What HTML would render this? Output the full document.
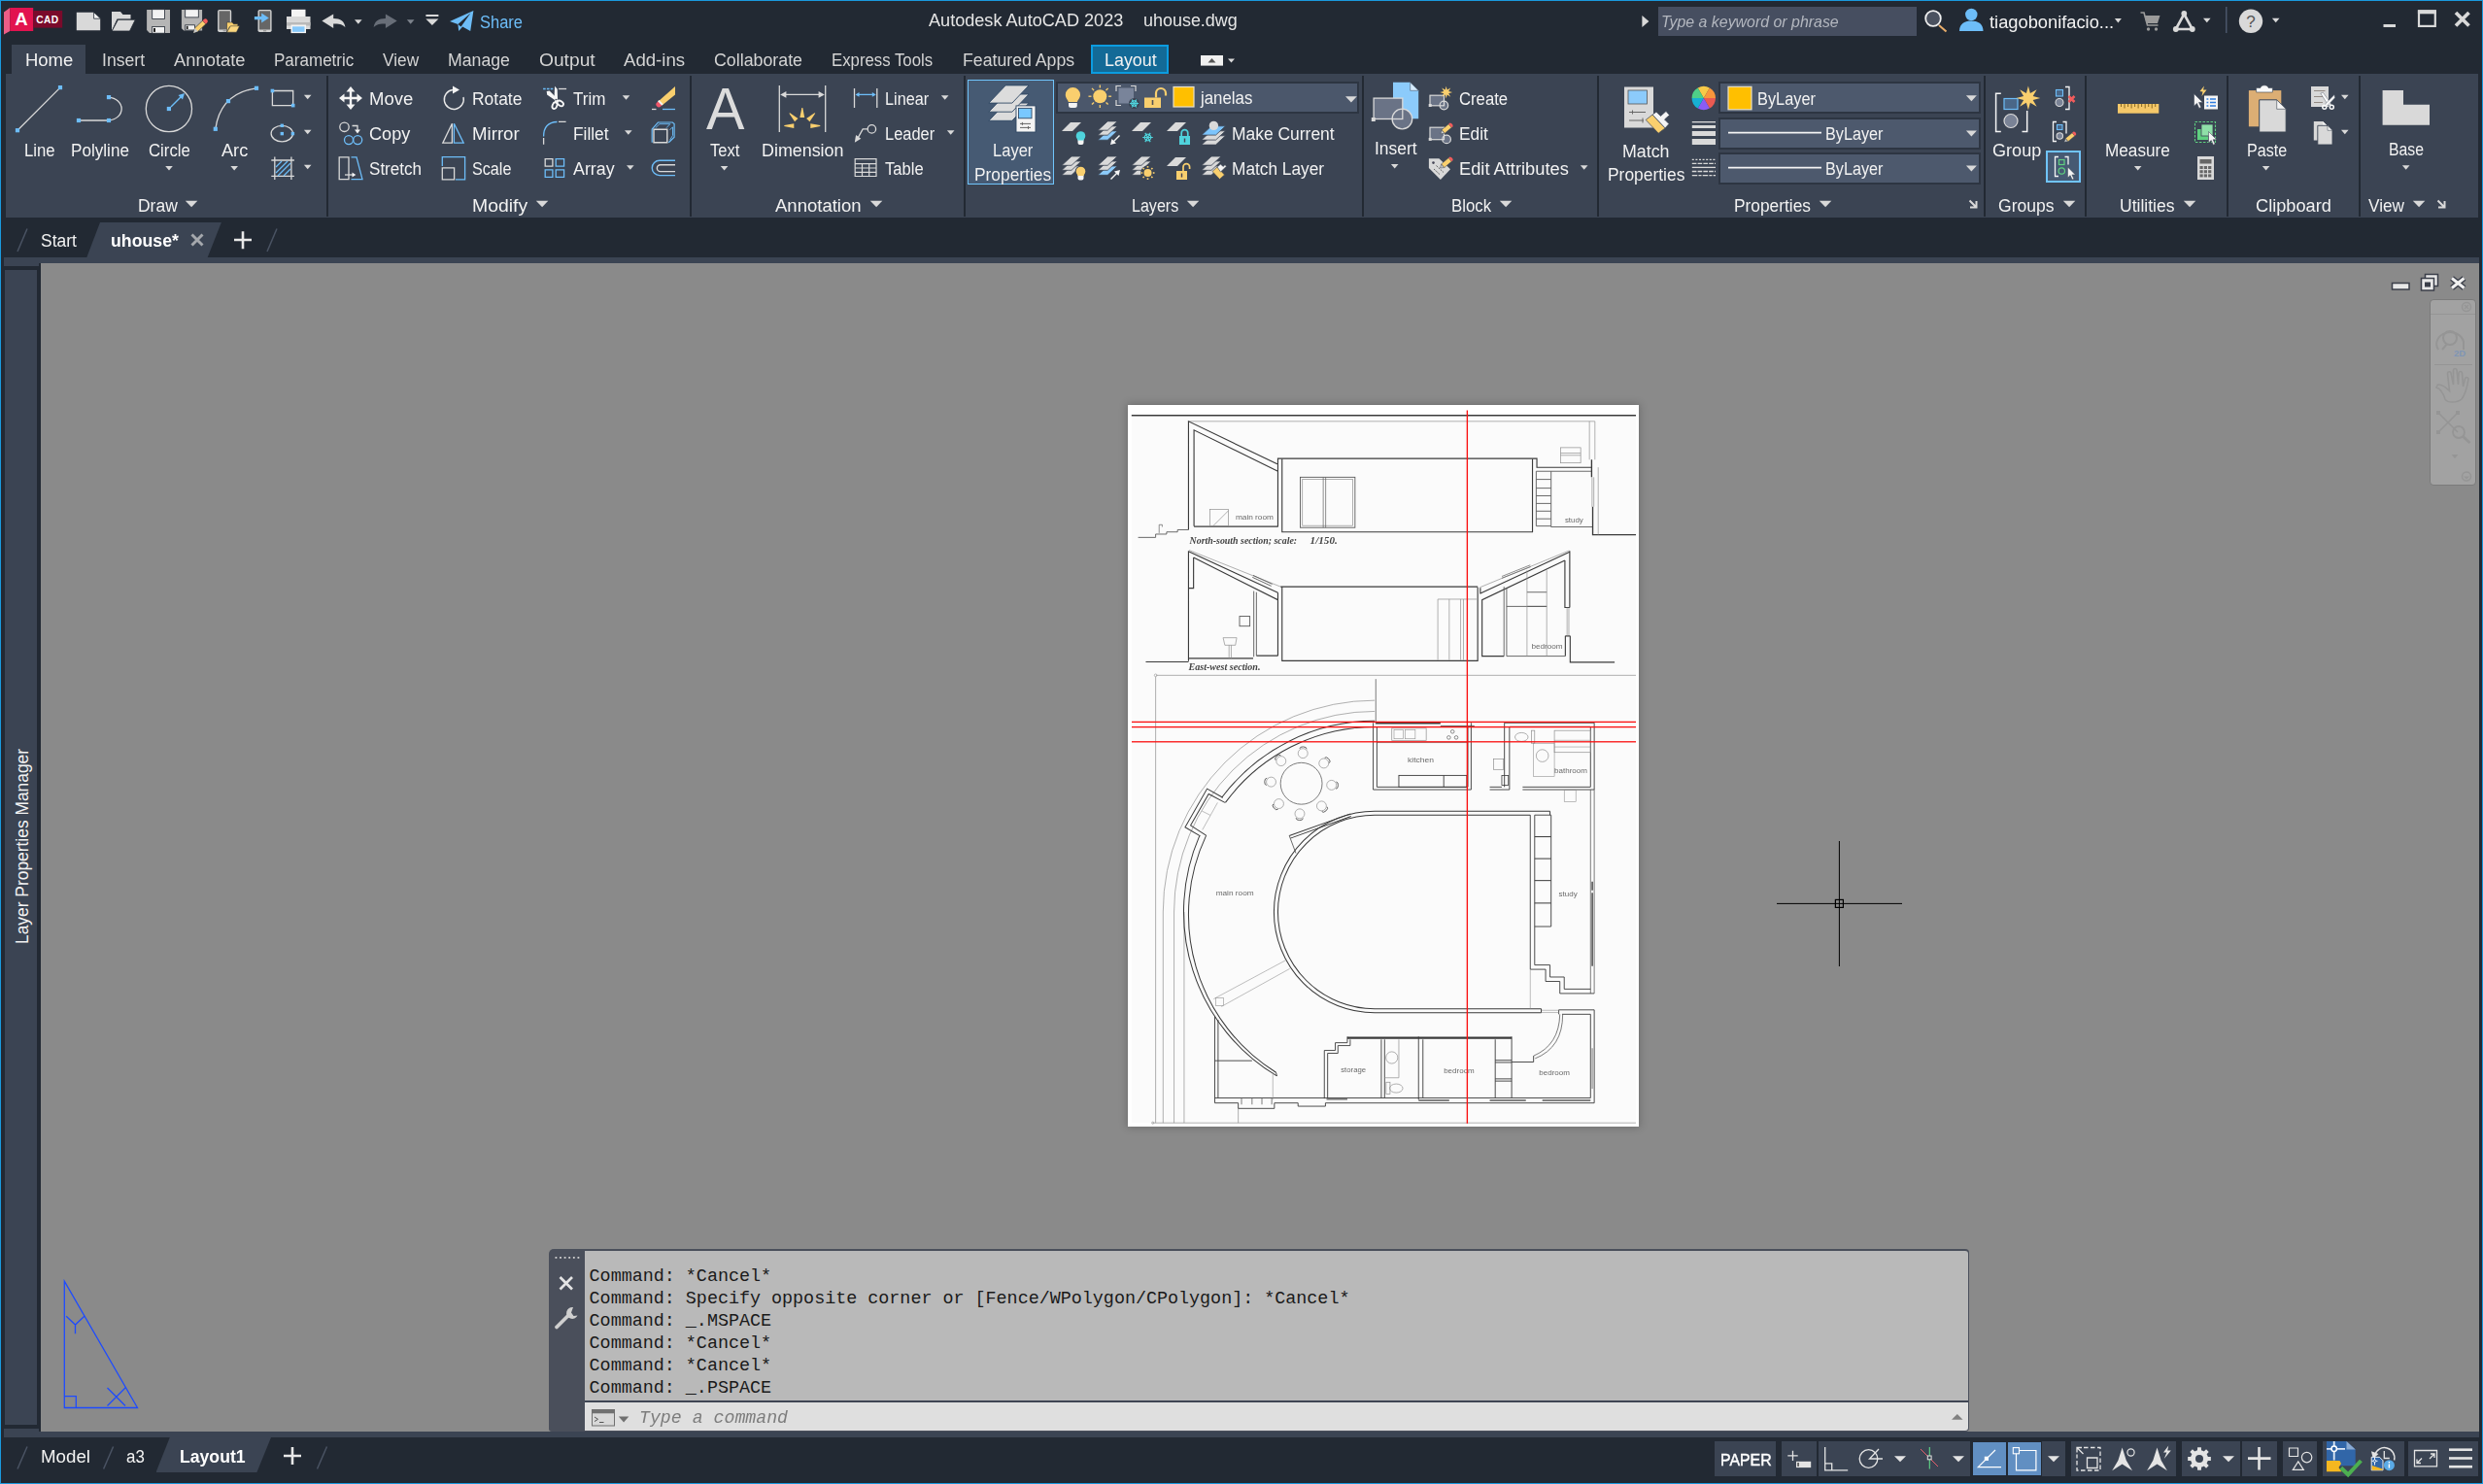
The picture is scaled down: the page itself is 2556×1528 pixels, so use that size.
<!DOCTYPE html>
<html><head><meta charset="utf-8"><title>Autodesk AutoCAD 2023 - uhouse.dwg</title>
<style>
html,body{margin:0;padding:0;background:#222933;overflow:hidden}
#app{position:relative;width:2556px;height:1528px;overflow:hidden;background:#222933}
.r{position:absolute}
.t{position:absolute;white-space:nowrap;transform-origin:0 0;margin:0;padding:0}
svg{position:absolute;overflow:visible}
</style></head><body><div id="app">
<div class="r" style="left:6px;top:76px;width:2545px;height:148px;background:#3b4453;"></div>
<div class="r" style="left:12px;top:46px;width:76px;height:31px;background:#3b4453;"></div>
<div class="r" style="left:336px;top:78px;width:2px;height:145px;background:#222933;"></div>
<div class="r" style="left:710px;top:78px;width:2px;height:145px;background:#222933;"></div>
<div class="r" style="left:992px;top:78px;width:2px;height:145px;background:#222933;"></div>
<div class="r" style="left:1402px;top:78px;width:2px;height:145px;background:#222933;"></div>
<div class="r" style="left:1644px;top:78px;width:2px;height:145px;background:#222933;"></div>
<div class="r" style="left:2042px;top:78px;width:2px;height:145px;background:#222933;"></div>
<div class="r" style="left:2146px;top:78px;width:2px;height:145px;background:#222933;"></div>
<div class="r" style="left:2292px;top:78px;width:2px;height:145px;background:#222933;"></div>
<div class="r" style="left:2428px;top:78px;width:2px;height:145px;background:#222933;"></div>
<div class="r" style="left:1123px;top:46px;width:80px;height:30px;background:#136a97;box-sizing:border-box;border:2px solid #0c9ce0;"></div>
<div class="r" style="left:996.4px;top:82.2px;width:88.6px;height:108px;background:#465a73;box-sizing:border-box;border:1.8px solid #70c4fb;"></div>
<div class="r" style="left:2106.2px;top:155.2px;width:35.9px;height:33px;background:#465a73;box-sizing:border-box;border:2px solid #70c4fb;"></div>
<div class="r" style="left:1087px;top:84px;width:312px;height:33px;background:#4b576b;box-sizing:border-box;border:2px solid #2d3542;"></div>
<div class="r" style="left:1769px;top:84px;width:270px;height:33px;background:#4d596d;box-sizing:border-box;border:2px solid #2d3542;"></div>
<div class="r" style="left:1769px;top:121px;width:270px;height:33px;background:#4d596d;box-sizing:border-box;border:2px solid #2d3542;"></div>
<div class="r" style="left:1769px;top:157px;width:270px;height:33px;background:#4d596d;box-sizing:border-box;border:2px solid #2d3542;"></div>
<div class="r" style="left:1707px;top:7px;width:266px;height:30px;background:#464e60;"></div>
<div class="r" style="left:89.3px;top:229px;width:138.6px;height:36px;background:#3b4453;clip-path:polygon(13.7px 0,100% 0,calc(100% - 14.2px) 100%,0 100%)"></div>
<div class="r" style="left:4px;top:265px;width:2548px;height:6px;background:#3b4453;"></div>
<div class="r" style="left:4px;top:271px;width:36px;height:3px;background:#3b4453;"></div>
<div class="r" style="left:42px;top:271px;width:2510px;height:1203px;background:#8a8a8a;"></div>
<div class="r" style="left:5px;top:278px;width:33px;height:1189px;background:#3b4453;"></div>
<div class="r" style="left:4px;top:1474px;width:2548px;height:6px;background:#3b4453;"></div>
<div class="r" style="left:4px;top:1471px;width:36px;height:3px;background:#3b4453;"></div>
<div class="r" style="left:160.5px;top:1480px;width:118.5px;height:36px;background:#3b4453;clip-path:polygon(14.3px 0,100% 0,calc(100% - 14.6px) 100%,0 100%)"></div>
<div class="r" style="left:2501px;top:307.5px;width:48px;height:192px;background:#a2a2a2;box-sizing:border-box;border:1px solid #7b7b7b;border-radius:4px;"></div>
<div class="r" style="left:565px;top:1286px;width:1462px;height:188px;background:#4a4f5b;border-radius:5px 4px 4px 3px;"></div>
<div class="r" style="left:602px;top:1287.5px;width:1423.5px;height:154px;background:#b9b9b9;border-radius:0 3px 0 0;"></div>
<div class="r" style="left:602px;top:1443.5px;width:1423.5px;height:29.5px;background:#dfdfdf;border-radius:0 0 3px 0;"></div>
<div class="r" style="left:602px;top:1441.8px;width:1423.5px;height:2.2px;background:#3f4654;"></div>
<div class="r" style="left:1764.8px;top:1483.7px;width:63.40000000000009px;height:36.2px;background:#3b4453;"></div>
<div class="r" style="left:1833.8px;top:1483.7px;width:36.200000000000045px;height:36.2px;background:#3b4453;"></div>
<div class="r" style="left:1871.7px;top:1483.7px;width:156.5px;height:36.2px;background:#3b4453;"></div>
<div class="r" style="left:2101.6px;top:1483.7px;width:24.90000000000009px;height:36.2px;background:#3b4453;"></div>
<div class="r" style="left:2132px;top:1483.7px;width:108.19999999999982px;height:36.2px;background:#3b4453;"></div>
<div class="r" style="left:2245.7px;top:1483.7px;width:60.30000000000018px;height:36.2px;background:#3b4453;"></div>
<div class="r" style="left:2307.8px;top:1483.7px;width:36.19999999999982px;height:36.2px;background:#3b4453;"></div>
<div class="r" style="left:2349.8px;top:1483.7px;width:35.19999999999982px;height:36.2px;background:#3b4453;"></div>
<div class="r" style="left:2390.5px;top:1483.7px;width:84.5px;height:36.2px;background:#3b4453;"></div>
<div class="r" style="left:2478.7px;top:1483.7px;width:72.30000000000018px;height:36.2px;background:#3b4453;"></div>
<div class="r" style="left:2031px;top:1485px;width:34px;height:34.2px;background:#618fc2;"></div>
<div class="r" style="left:2067px;top:1485px;width:34px;height:34.2px;background:#618fc2;"></div>
<div class="r" style="left:0px;top:0px;width:2556px;height:1.3px;background:#1a9ade;"></div>
<div class="r" style="left:0px;top:0px;width:1.3px;height:1528px;background:#1a9ade;"></div>
<div class="r" style="left:0px;top:1526.6px;width:2556px;height:1.4px;background:#1a9ade;"></div>
<div class="r" style="left:2555px;top:0px;width:1px;height:1528px;background:#1a9ade;"></div>
<div class="r" style="left:1161px;top:417px;width:526px;height:743px;background:#ffffff;box-shadow:0 0 8px 1px rgba(0,0,0,0.22);"></div>
<div class="r" style="left:1165px;top:429px;width:519px;height:727px;background:#fbfbfb;"></div>
<svg class="r" style="left:1140px;top:400px;filter:blur(0.35px)" width="560" height="820" viewBox="0 0 2483 3635.9" fill="none" stroke-linecap="butt"><path d="M110 123H2412" stroke="#3a3a3a" stroke-width="7"/>
<path d="M370 150H2225" stroke="#8c8c8c" stroke-width="3"/>
<path d="M370 645V150L775 345M395 628V190L778 378M395 630H778M778 632V320H1960V360H2210" stroke="#3a3a3a" stroke-width="5"/>
<path d="M797 322V655H1940V322" stroke="#3a3a3a" stroke-width="5"/>
<path d="M140 680H220V665H270V655H320V645H370" stroke="#5a5a5a" stroke-width="4"/>
<path d="M236 660V622H250V632" stroke="#5a5a5a" stroke-width="3"/>
<rect x="880" y="405" width="250" height="230" stroke="#5a5a5a" stroke-width="4"/>
<rect x="890" y="414" width="230" height="212" stroke="#8c8c8c" stroke-width="3"/>
<path d="M985 405V635M996 405V635" stroke="#5a5a5a" stroke-width="3"/>
<rect x="468" y="552" width="84" height="76" stroke="#8c8c8c" stroke-width="3"/>
<path d="M482 628L552 558" stroke="#8c8c8c" stroke-width="3"/>
<text x="585" y="598" font-size="29" fill="#6a6a6a" stroke="none" font-family="Liberation Sans,sans-serif"  textLength="173" lengthAdjust="spacingAndGlyphs">main room</text>
<path d="M1957 378H2210M1957 378V628H2025M2025 378V632H2215" stroke="#5a5a5a" stroke-width="4"/>
<path d="M1957 415H2025" stroke="#5a5a5a" stroke-width="4"/>
<path d="M1957 455H2025" stroke="#5a5a5a" stroke-width="4"/>
<path d="M1957 490H2025" stroke="#5a5a5a" stroke-width="4"/>
<path d="M1957 525H2025" stroke="#5a5a5a" stroke-width="4"/>
<path d="M1957 560H2025" stroke="#5a5a5a" stroke-width="4"/>
<path d="M1957 595H2025" stroke="#5a5a5a" stroke-width="4"/>
<text x="2088" y="614" font-size="29" fill="#6a6a6a" stroke="none" font-family="Liberation Sans,sans-serif"  textLength="84" lengthAdjust="spacingAndGlyphs">study</text>
<path d="M2215 540V668H2412M2210 325V405" stroke="#3a3a3a" stroke-width="6"/>
<path d="M2225 150V325M2240 360V668M2200 150V325M2212 405V540M2220 405V540" stroke="#8c8c8c" stroke-width="3"/>
<rect x="2068" y="270" width="92" height="70" stroke="#8c8c8c" stroke-width="3"/>
<path d="M2068 295H2160M2068 305H2160" stroke="#8c8c8c" stroke-width="3"/>
<text x="375" y="710" font-size="43" fill="#444" stroke="none" font-family="Liberation Serif,serif" font-style="italic" font-weight="bold" textLength="490" lengthAdjust="spacingAndGlyphs">North-south section; scale:</text>
<text x="925" y="710" font-size="43" fill="#444" stroke="none" font-family="Liberation Serif,serif" font-style="italic" font-weight="bold" textLength="125" lengthAdjust="spacingAndGlyphs">1/150.</text>
<path d="M175 1248H370M370 742V1245M393 772V912H370M370 744L778 932M393 772L778 965V1220M370 1232H665M680 1220H778M778 932V965" stroke="#3a3a3a" stroke-width="5"/>
<path d="M372 738L790 905" stroke="#8c8c8c" stroke-width="3"/>
<path d="M668 925V1225M680 930V1220" stroke="#5a5a5a" stroke-width="4"/>
<path d="M665 853L752 893M662 862L748 902" stroke="#5a5a5a" stroke-width="4"/>
<path d="M790 905H1690M797 908V1243H1690V908" stroke="#3a3a3a" stroke-width="5"/>
<path d="M1508 1240V962H1685M1560 962V1240M1612 962V1240M1625 962V1240" stroke="#8c8c8c" stroke-width="3"/>
<path d="M2110 746L1702 936M2088 785L1710 965V1222H1810M1702 910V938" stroke="#3a3a3a" stroke-width="5"/>
<path d="M2108 740L1700 908" stroke="#8c8c8c" stroke-width="3"/>
<path d="M2110 742V1000M2088 785V1000H2110M2112 1130V1250H2315M2090 1130V1222M2090 1130H2112" stroke="#3a3a3a" stroke-width="5"/>
<path d="M2098 1000V1130M2106 1000V1130" stroke="#8c8c8c" stroke-width="3"/>
<path d="M1810 905V1222M1822 910V1222H2090" stroke="#5a5a5a" stroke-width="4"/>
<path d="M1822 995H2005M1915 930H2005M1915 995H2005" stroke="#5a5a5a" stroke-width="4"/>
<path d="M1915 830V1222M2005 830V1222" stroke="#8c8c8c" stroke-width="3"/>
<path d="M1800 858L1930 806M1800 866L1932 814" stroke="#5a5a5a" stroke-width="3"/>
<rect x="603" y="1040" width="47" height="45" stroke="#5a5a5a" stroke-width="4"/>
<path d="M528 1138H590L584 1172H536zM555 1172V1232M565 1172V1232" stroke="#8c8c8c" stroke-width="3"/>
<text x="1935" y="1190" font-size="29" fill="#6a6a6a" stroke="none" font-family="Liberation Sans,sans-serif"  textLength="143" lengthAdjust="spacingAndGlyphs">bedroom</text>
<text x="370" y="1288" font-size="43" fill="#444" stroke="none" font-family="Liberation Serif,serif" font-style="italic" font-weight="bold" textLength="328" lengthAdjust="spacingAndGlyphs">East-west section.</text>
<path d="M222 1309.5H2412M220 1315.5V3353M205 3353H2412" stroke="#8c8c8c" stroke-width="3"/>
<circle cx="220" cy="1309.5" r="6" stroke="#8c8c8c" stroke-width="2.5"/>
<circle cx="207" cy="3353" r="5" stroke="#8c8c8c" stroke-width="2.5"/>
<path d="M1225 1326.5V1531.5" stroke="#5a5a5a" stroke-width="3.5"/>
<path d="M1220 1424A966 966 0 0 0 254 2390V3353" stroke="#8c8c8c" stroke-width="3"/>
<path d="M1220 1474A916 916 0 0 0 304 2390V3353" stroke="#8c8c8c" stroke-width="3"/>
<path d="M350 2390V3353" stroke="#8c8c8c" stroke-width="3"/>
<path d="M597 3287V3353" stroke="#8c8c8c" stroke-width="3"/>
<path d="M1220.0 1518.0A872 872 0 0 0 521.5 1868.0" stroke="#3a3a3a" stroke-width="4.5"/>
<path d="M419.7 2043.7A872 872 0 0 0 773.5 3139.0" stroke="#3a3a3a" stroke-width="4.5"/>
<path d="M1220.0 1545.0A845 845 0 0 0 538.3 1890.7" stroke="#3a3a3a" stroke-width="4.5"/>
<path d="M450.8 2040.1A850 850 0 0 0 769.4 3122.5" stroke="#3a3a3a" stroke-width="4.5"/>
<path d="M769.4 3122.5L773.5 3139.0" stroke="#3a3a3a" stroke-width="4"/>
<path d="M526.7 1868.0L454.9 1827.3L354.5 2003.1L423.8 2043.7" stroke="#3a3a3a" stroke-width="4.5"/>
<path d="M536.2 1890.7L462 1851.2L379.6 1994.7L450.1 2040.1" stroke="#3a3a3a" stroke-width="4.5"/>
<path d="M502.7 1890.7L433.4 2015.0M431 1929.0L469.2 1948.1" stroke="#8c8c8c" stroke-width="2.5"/>
<path d="M2020 1930H1220A460 460 0 0 0 1220 2850H1980" stroke="#3a3a3a" stroke-width="4.5"/>
<path d="M1930 1948H1220A442 442 0 0 0 1220 2832H1980" stroke="#3a3a3a" stroke-width="4.5"/>
<path d="M2020 1930V1948M1980 2832V2850" stroke="#3a3a3a" stroke-width="4.5"/>
<path d="M830 2041.5L1110 1941.5M835 2053.5L1112 1953.5" stroke="#3a3a3a" stroke-width="4.5"/>
<path d="M830 2041.5L860 2121.5" stroke="#5a5a5a" stroke-width="4"/>
<path d="M485 2787L820 2607M520 2822L832 2649" stroke="#8c8c8c" stroke-width="2.5"/>
<rect x="495" y="2783" width="35" height="34" stroke="#8c8c8c" stroke-width="2.5"/>
<circle cx="885" cy="1803.5" r="95" stroke="#5a5a5a" stroke-width="3.5"/>
<circle cx="892.2" cy="1665.7" r="22" stroke="#8c8c8c" stroke-width="3"/>
<path d="M-16 0A16 10 0 0 1 16 0" stroke="#5a5a5a" stroke-width="4" transform="translate(893.3 1645.7) rotate(3)"/>
<circle cx="987.6" cy="1711.2" r="22" stroke="#8c8c8c" stroke-width="3"/>
<path d="M-16 0A16 10 0 0 1 16 0" stroke="#5a5a5a" stroke-width="4" transform="translate(1002.4 1697.8) rotate(48)"/>
<circle cx="1022.8" cy="1810.7" r="22" stroke="#8c8c8c" stroke-width="3"/>
<path d="M-16 0A16 10 0 0 1 16 0" stroke="#5a5a5a" stroke-width="4" transform="translate(1042.8 1811.8) rotate(93)"/>
<circle cx="977.3" cy="1906.1" r="22" stroke="#8c8c8c" stroke-width="3"/>
<path d="M-16 0A16 10 0 0 1 16 0" stroke="#5a5a5a" stroke-width="4" transform="translate(990.7 1920.9) rotate(138)"/>
<circle cx="877.8" cy="1941.3" r="22" stroke="#8c8c8c" stroke-width="3"/>
<path d="M-16 0A16 10 0 0 1 16 0" stroke="#5a5a5a" stroke-width="4" transform="translate(876.7 1961.3) rotate(183)"/>
<circle cx="782.4" cy="1895.8" r="22" stroke="#8c8c8c" stroke-width="3"/>
<path d="M-16 0A16 10 0 0 1 16 0" stroke="#5a5a5a" stroke-width="4" transform="translate(767.6 1909.2) rotate(228)"/>
<circle cx="747.2" cy="1796.3" r="22" stroke="#8c8c8c" stroke-width="3"/>
<path d="M-16 0A16 10 0 0 1 16 0" stroke="#5a5a5a" stroke-width="4" transform="translate(727.2 1795.2) rotate(273)"/>
<circle cx="792.7" cy="1700.9" r="22" stroke="#8c8c8c" stroke-width="3"/>
<path d="M-16 0A16 10 0 0 1 16 0" stroke="#5a5a5a" stroke-width="4" transform="translate(779.3 1686.1) rotate(318)"/>
<text x="495" y="2313.5" font-size="29" fill="#6a6a6a" stroke="none" font-family="Liberation Sans,sans-serif"  textLength="173" lengthAdjust="spacingAndGlyphs">main room</text>
<path d="M1213 1526.5V1831.5H1660V1526.5M1230 1544.5V1819.5H1645V1544.5" stroke="#3a3a3a" stroke-width="4"/>
<path d="M1225 1528.5H1520M1520 1542.5H1675" stroke="#3a3a3a" stroke-width="6"/>
<path d="M1230 1616.5H1645" stroke="#5a5a5a" stroke-width="3"/>
<rect x="1298" y="1551.5" width="157" height="55.0" stroke="#8c8c8c" stroke-width="3"/>
<rect x="1308" y="1559.5" width="42" height="40.0" stroke="#8c8c8c" stroke-width="2.5"/>
<rect x="1358" y="1559.5" width="47" height="40.0" stroke="#8c8c8c" stroke-width="2.5"/>
<circle cx="1575" cy="1566.5" r="8" stroke="#5a5a5a" stroke-width="3"/>
<circle cx="1558" cy="1593.5" r="8" stroke="#5a5a5a" stroke-width="3"/>
<circle cx="1592" cy="1593.5" r="8" stroke="#5a5a5a" stroke-width="3"/>
<rect x="1330" y="1766.5" width="310" height="53.0" stroke="#3a3a3a" stroke-width="4"/>
<path d="M1535 1766.5V1819.5" stroke="#3a3a3a" stroke-width="4"/>
<text x="1370" y="1706.5" font-size="29" fill="#6a6a6a" stroke="none" font-family="Liberation Sans,sans-serif"  textLength="120" lengthAdjust="spacingAndGlyphs">kitchen</text>
<path d="M1745 1831.5H1835M1745 1819.5H1800" stroke="#3a3a3a" stroke-width="4"/>
<rect x="1800" y="1766.5" width="30" height="45.0" stroke="#3a3a3a" stroke-width="3.5"/>
<path d="M1812 1526.5V1819.5M1835 1544.5V1831.5M1812 1526.5H2222V1831.5H1895M1835 1544.5H2205V1819.5H1895" stroke="#3a3a3a" stroke-width="4"/>
<ellipse cx="1890" cy="1591.5" rx="30" ry="20" stroke="#8c8c8c" stroke-width="3"/>
<rect x="1935" y="1561.5" width="15" height="58.0" stroke="#8c8c8c" stroke-width="3"/>
<circle cx="1985" cy="1676.5" r="28" stroke="#8c8c8c" stroke-width="3"/>
<rect x="1945" y="1619.5" width="95" height="152.0" stroke="#8c8c8c" stroke-width="2.5"/>
<rect x="2040" y="1561.5" width="165" height="100.0" stroke="#8c8c8c" stroke-width="3"/>
<path d="M2040 1606.5H2205M2040 1636.5H2205" stroke="#8c8c8c" stroke-width="2.5"/>
<rect x="1762" y="1691.5" width="46" height="48.0" stroke="#8c8c8c" stroke-width="3"/>
<rect x="2085" y="1833.5" width="53" height="53.0" stroke="#8c8c8c" stroke-width="2.5"/>
<text x="2040" y="1757.5" font-size="29" fill="#6a6a6a" stroke="none" font-family="Liberation Sans,sans-serif"  textLength="150" lengthAdjust="spacingAndGlyphs">bathroom</text>
<path d="M2205 1831.5V2762M2222 1831.5V2762" stroke="#5a5a5a" stroke-width="3.5"/>
<path d="M2213 2251.5V2291.5M2213 2481.5V2302M2213 2477V2637" stroke="#3a3a3a" stroke-width="6"/>
<path d="M1930 1947.5V2652M1950 1947.5V2632" stroke="#3a3a3a" stroke-width="4"/>
<path d="M1950 1947.5H2025V2456.5H1950" stroke="#3a3a3a" stroke-width="4"/>
<path d="M1950 2046.5H2025" stroke="#3a3a3a" stroke-width="4.5"/>
<path d="M1950 2146.5H2025" stroke="#3a3a3a" stroke-width="4.5"/>
<path d="M1950 2246.5H2025" stroke="#3a3a3a" stroke-width="4.5"/>
<path d="M1950 2349.5H2025" stroke="#3a3a3a" stroke-width="4.5"/>
<text x="2060" y="2319.5" font-size="29" fill="#6a6a6a" stroke="none" font-family="Liberation Sans,sans-serif"  textLength="85" lengthAdjust="spacingAndGlyphs">study</text>
<path d="M1930 2652H2000V2707H2065V2762H2222M1950 2632H2020V2687H2085V2742H2205" stroke="#3a3a3a" stroke-width="4"/>
<path d="M1930 2652V2832" stroke="#8c8c8c" stroke-width="2.5"/>
<path d="M2060 2837H2222M2075 2857H2205M2205 2857V3239M2222 2837V3262M2060 2837V2857" stroke="#3a3a3a" stroke-width="4"/>
<path d="M1980 2839H2060M1980 2849H2060" stroke="#8c8c8c" stroke-width="2.5"/>
<path d="M2065 2857Q2062 2997 1945 3047M2078 2857Q2078 3009 1952 3059" stroke="#5a5a5a" stroke-width="3.5"/>
<path d="M1945 3047V3075H1845" stroke="#3a3a3a" stroke-width="4"/>
<path d="M2213 3012V3197" stroke="#8c8c8c" stroke-width="5"/>
<path d="M1095 2965H1845" stroke="#3a3a3a" stroke-width="10"/>
<path d="M990 3242V3022H1040V2987H1095V2959M1005 3239V3035H1052V3000H1108V2972" stroke="#3a3a3a" stroke-width="4"/>
<path d="M1250 2972V3239M1265 2972V3239M1420 2959V3247M1440 2972V3239" stroke="#3a3a3a" stroke-width="4"/>
<path d="M1330 2972V3147H1265" stroke="#8c8c8c" stroke-width="3"/>
<circle cx="1298" cy="3055" r="27" stroke="#8c8c8c" stroke-width="3"/>
<ellipse cx="1318" cy="3195" rx="30" ry="20" stroke="#8c8c8c" stroke-width="3"/>
<rect x="1272" y="3167" width="18" height="55" stroke="#8c8c8c" stroke-width="3"/>
<path d="M1770 2972V3239M1845 2959V3239M1770 3067H1845M1770 3077H1845M1770 3152H1845M1770 3162H1845" stroke="#3a3a3a" stroke-width="4"/>
<path d="M490 3239H2205M490 3262H597V3287H762V3262H870V3277H995V3262H2222" stroke="#3a3a3a" stroke-width="4"/>
<path d="M1000 3245H1095M1420 3250H1560M1745 3250H1910M1985 3250H2205" stroke="#5a5a5a" stroke-width="6"/>
<path d="M612 3239V3269M660 3239V3269M705 3239V3269M750 3239V3269" stroke="#5a5a5a" stroke-width="3.5"/>
<path d="M490 2867V3262M505 2882V3239M490 3069H660" stroke="#3a3a3a" stroke-width="4"/>
<path d="M755 3122V3247" stroke="#8c8c8c" stroke-width="2.5"/>
<text x="1065" y="3120" font-size="29" fill="#6a6a6a" stroke="none" font-family="Liberation Sans,sans-serif"  textLength="115" lengthAdjust="spacingAndGlyphs">storage</text>
<text x="1535" y="3127" font-size="29" fill="#6a6a6a" stroke="none" font-family="Liberation Sans,sans-serif"  textLength="140" lengthAdjust="spacingAndGlyphs">bedroom</text>
<text x="1970" y="3135" font-size="29" fill="#6a6a6a" stroke="none" font-family="Liberation Sans,sans-serif"  textLength="140" lengthAdjust="spacingAndGlyphs">bedroom</text></svg>
<svg class="r" style="left:0;top:0" width="2556" height="1528" viewBox="0 0 2556 1528"><rect x="1509.700" y="422.500" width="1.350" height="734.300" fill="#fa0f0f"/><rect x="1165" y="742.75" width="519" height="1.300" fill="#fa0f0f"/><rect x="1165" y="747.95" width="519" height="1.300" fill="#fa0f0f"/><rect x="1165" y="763.15" width="519" height="1.300" fill="#fa0f0f"/></svg>
<svg style="left:0;top:0" width="2556" height="1528" viewBox="0 0 2556 1528">
<path d="M4 12.5L10.2 8V32L4 35.5z" fill="#ec5d86"/><rect x="10.2" y="8" width="24" height="24" fill="#e2134f"/><rect x="34.2" y="11" width="30" height="17.6" fill="#7a0a2b"/>
<text x="22" y="26.3" font-family="Liberation Sans,sans-serif" font-weight="bold" font-size="18.5" fill="#fff" text-anchor="middle">A</text>
<text x="49" y="23.8" font-family="Liberation Sans,sans-serif" font-weight="bold" font-size="10.2" fill="#fff" text-anchor="middle" letter-spacing="0.4">CAD</text>
<path d="M78.800 12.800H96.200L103.200 19V31.200H78.800z" fill="#d9d9d9"/><path d="M96.600 12.600V19.200H103.600z" fill="#f6f6f6" stroke="#222933" stroke-width="0.800"/>
<path d="M115 12h9l2.500 3h8v4.500h-14l-5.500 12z" fill="#d9d9d9"/><path d="M121.500 20.300h17.800l-5.800 11.700h-18.300z" fill="#d9d9d9" stroke="#222933" stroke-width="0.800"/>
<path d="M151.100 9.900h23.900v24h-21l-2.900-2.900z" fill="#b5b5b5"/><rect x="156.700" y="9.700" width="12.800" height="9.700" fill="#f2f2f2" stroke="#222933" stroke-width="0.800"/><rect x="156.700" y="27.400" width="12.800" height="6.800" fill="#f2f2f2" stroke="#222933" stroke-width="0.800"/><rect x="158" y="29" width="2" height="3.900" fill="#222"/>
<path d="M186.900 9.900h21.200v21.700h-18.800l-2.400-2.400z" fill="#b5b5b5"/><rect x="190.700" y="9.700" width="13.600" height="8.200" fill="#f2f2f2" stroke="#222933" stroke-width="0.800"/><rect x="190.700" y="25.800" width="9.800" height="5.200" fill="#f2f2f2" stroke="#222933" stroke-width="0.800"/><rect x="191.800" y="26.800" width="1.800" height="3.200" fill="#222"/>
<path d="M199.200 34l1.400-5.200 8-7.600 3.300 3.500-8 7.600z" fill="#f9cf6e" stroke="#222933" stroke-width="0.600"/><path d="M199.200 34l1.400-5.200 3.300 3.500z" fill="#c8c8c8"/><path d="M208.600 21.200l1.200-1.100a2.400 2.400 0 0 1 3.300 3.500l-1.200 1.100z" fill="#f25c5c"/>
<rect x="224.100" y="9.900" width="14.100" height="23.100" rx="1.800" fill="#d2d2d2"/><rect x="225.500" y="11.300" width="11.300" height="19.200" fill="#666"/><rect x="229.600" y="31.300" width="3.200" height="1" fill="#888"/><path d="M233.500 23h5.500l1.500 1.800h4.300v3h-8.500l-2.800 5.200z" fill="#f9cf6e" stroke="#222933" stroke-width="0.500"/><path d="M237.300 26.800h9.300l-3.200 6.400h-9.800z" fill="#fbd77f" stroke="#222933" stroke-width="0.500"/>
<rect x="265.500" y="9.900" width="14.100" height="23.100" rx="1.800" fill="#d2d2d2"/><rect x="266.900" y="11.300" width="11.300" height="19.200" fill="#666"/><rect x="271" y="31.300" width="3.200" height="1" fill="#888"/><path d="M261.900 17h7.300v-3.400l7.600 5-7.600 5v-3.400h-7.300z" fill="#6dbdf8"/>
<rect x="300" y="9.8" width="14.5" height="8" fill="#f4f4f4"/><path d="M295 17h24.5v13h-24.5z" fill="#d9d9d9"/><rect x="295" y="23" width="24.5" height="3.5" fill="#b9b9b9"/><rect x="299.5" y="25.5" width="15.5" height="8.6" fill="#f4f4f4"/><rect x="301" y="27.3" width="12.5" height="5.5" fill="#86c8fa"/>
<path d="M331.400 21.600L343.200 14.600V19C350.500 19 354.800 22 355.400 28.200C352.500 25 348.500 24.600 343.200 24.600V29z" fill="#d9d9d9"/><path d="M365.0 20.2h7.6l-3.8 4.6z" fill="#d9d9d9"/>
<path d="M408.700 21.600L396.900 14.600V19C389.600 19 385.300 22 384.700 28.200C387.600 25 391.600 24.600 396.900 24.600V29z" fill="#686e78"/><path d="M418.9 20.2h7.6l-3.8 4.6z" fill="#7d838c"/>
<rect x="438.4" y="15" width="13" height="2" fill="#d9d9d9"/><path d="M438.4 19.4h13l-6.5 6.6z" fill="#d9d9d9"/>
<path d="M463 22l24.4-11-3.2 21-8-4.5-4 4.5-.8-7z" fill="#6dbdf8"/><path d="M471.4 25l13-11.5-9.8 14z" fill="#222933"/>
<rect x="1236" y="57" width="23" height="10.6" fill="#f0f0f0"/><path d="M1243.5 64.5h8l-4-4.5z" fill="#555"/><path d="M1264.0 60.4h7l-3.5 4.2z" fill="#d9d9d9"/>
<path d="M1690.4 16v12l7-6z" fill="#d9d9d9"/>
<circle cx="1990" cy="19" r="7.8" fill="#4b5260" stroke="#f0f0f0" stroke-width="1.8"/><path d="M1996 26l7.5 6.5" stroke="#e9ad6b" stroke-width="2"/>
<circle cx="2029.3" cy="15" r="6.2" fill="#6dbdf8"/><path d="M2017 32c0-8 6-10.5 12.3-10.5s12.2 2.500 12.2 10.5z" fill="#6dbdf8"/>
<path d="M2176.9 19.1h7l-3.5 4.4z" fill="#d9d9d9"/>
<path d="M2203.5 13h3.500l3.5 13h11" fill="none" stroke="#9a9a9a" stroke-width="1.6"/><path d="M2207.5 16h16l-2.500 8h-11.500z" fill="#9a9a9a"/><circle cx="2211.5" cy="30" r="1.700" fill="#9a9a9a"/><circle cx="2219.5" cy="30" r="1.700" fill="#9a9a9a"/>
<path d="M2248.3 14.500L2239.800 30h17z" fill="none" stroke="#d9d9d9" stroke-width="2.600" stroke-linejoin="round"/><circle cx="2248.3" cy="14" r="2.900" fill="#d9d9d9"/><circle cx="2239.800" cy="30" r="2.900" fill="#d9d9d9"/><circle cx="2256.800" cy="30" r="2.900" fill="#d9d9d9"/><path d="M2268.0 18.7h7.6l-3.8 4.6z" fill="#d9d9d9"/>
<rect x="2291" y="7" width="1.500" height="27" fill="#4a566b"/>
<circle cx="2317" cy="21.800" r="12.200" fill="#d9d9d9"/><text x="2317" y="28" font-family="Liberation Sans,sans-serif" font-size="17" fill="#555" text-anchor="middle">?</text><path d="M2338.9 18.7h7.6l-3.8 4.6z" fill="#d9d9d9"/>
<rect x="2453.500" y="25" width="12.500" height="3" fill="#d9d9d9"/><rect x="2490" y="11.400" width="16.800" height="15.500" fill="none" stroke="#d9d9d9" stroke-width="2.200"/><rect x="2488.900" y="10.300" width="19" height="4" fill="#d9d9d9"/><path d="M2528 13l13.500 13.500m0-13.500l-13.500 13.500" stroke="#d9d9d9" stroke-width="3.700" fill="none"/>
<path d="M197.500 241.500l11 11m0-11l-11 11" stroke="#a5a8ad" stroke-width="2.900"/>
<path d="M241 247h18M250 238.200v18" stroke="#e8e8e8" stroke-width="2.600"/>
<path d="M18 259l10-23.500" stroke="#4a5363" stroke-width="1.500"/>
<path d="M275 259l10-23.500" stroke="#4a5363" stroke-width="1.500"/>
<path d="M18 1512.500l10-23" stroke="#4a5363" stroke-width="1.500"/>
<path d="M106.6 1512.500l10-23" stroke="#4a5363" stroke-width="1.500"/>
<path d="M326.5 1512.500l10-23" stroke="#4a5363" stroke-width="1.500"/>
<path d="M292 1499h18M301 1490v18" stroke="#e8e8e8" stroke-width="2.600"/>
<path d="M190.8 206.8h12.5l-6.2 6.5z" fill="#d9d9d9"/>
<path d="M551.8 206.8h12.5l-6.2 6.5z" fill="#d9d9d9"/>
<path d="M895.8 206.8h12.5l-6.2 6.5z" fill="#d9d9d9"/>
<path d="M1221.8 206.8h12.5l-6.2 6.5z" fill="#d9d9d9"/>
<path d="M1543.8 206.8h12.5l-6.2 6.5z" fill="#d9d9d9"/>
<path d="M1872.8 206.8h12.5l-6.2 6.5z" fill="#d9d9d9"/>
<path d="M2123.8 206.8h12.5l-6.2 6.5z" fill="#d9d9d9"/>
<path d="M2247.8 206.8h12.5l-6.2 6.5z" fill="#d9d9d9"/>
<path d="M2483.8 206.8h12.5l-6.2 6.5z" fill="#d9d9d9"/>
<path d="M2027.5 206.500l6.500 6.500m0.500-6v6.500h-6.500" stroke="#d9d9d9" stroke-width="2" fill="none"/>
<path d="M2509.5 206.500l6.500 6.500m0.500-6v6.500h-6.500" stroke="#d9d9d9" stroke-width="2" fill="none"/>
<path d="M170.2 170.9h7.6l-3.8 4.6z" fill="#d9d9d9"/>
<path d="M237.4 170.9h7.6l-3.8 4.6z" fill="#d9d9d9"/>
<path d="M312.9 97.7h7.6l-3.8 4.6z" fill="#d9d9d9"/>
<path d="M312.9 133.7h7.6l-3.8 4.6z" fill="#d9d9d9"/>
<path d="M312.9 169.7h7.6l-3.8 4.6z" fill="#d9d9d9"/>
<path d="M640.7 98.2h7.6l-3.8 4.6z" fill="#d9d9d9"/>
<path d="M643.0 134.2h7.6l-3.8 4.6z" fill="#d9d9d9"/>
<path d="M645.0 170.2h7.6l-3.8 4.6z" fill="#d9d9d9"/>
<path d="M741.8 170.9h7.6l-3.8 4.6z" fill="#d9d9d9"/>
<path d="M968.9 98.2h7.6l-3.8 4.6z" fill="#d9d9d9"/>
<path d="M974.9 134.2h7.6l-3.8 4.6z" fill="#d9d9d9"/>
<path d="M1431.9 168.9h7.6l-3.8 4.6z" fill="#d9d9d9"/>
<path d="M1626.9 170.2h7.6l-3.8 4.6z" fill="#d9d9d9"/>
<path d="M2196.9 170.9h7.6l-3.8 4.6z" fill="#d9d9d9"/>
<path d="M2328.8 170.9h7.6l-3.8 4.6z" fill="#d9d9d9"/>
<path d="M2410.0 97.7h7.6l-3.8 4.6z" fill="#d9d9d9"/>
<path d="M2410.0 133.7h7.6l-3.8 4.6z" fill="#d9d9d9"/>
<path d="M2472.9 170.2h7.6l-3.8 4.6z" fill="#d9d9d9"/>
<path d="M1385.0 99.3h11.8l-5.9 6.3z" fill="#d9d9d9"/>
<path d="M2023.9 98.2h11l-5.5 6z" fill="#d9d9d9"/>
<path d="M2023.9 134.5h11l-5.5 6z" fill="#d9d9d9"/>
<path d="M2023.9 170.5h11l-5.5 6z" fill="#d9d9d9"/>
<path d="M18 134.200L62 90.100" stroke="#d9d9d9" stroke-width="1.3" fill="none" /><rect x="15.9" y="132.1" width="4.2" height="4.2" fill="#6dbdf8"/><rect x="59.9" y="88.0" width="4.2" height="4.2" fill="#6dbdf8"/>
<path d="M81 124H112A14.500 12 0 0 0 112 100.100" stroke="#d9d9d9" stroke-width="1.3" fill="none" /><rect x="78.9" y="121.9" width="4.2" height="4.2" fill="#6dbdf8"/><rect x="109.9" y="121.9" width="4.2" height="4.2" fill="#6dbdf8"/><rect x="109.9" y="98.0" width="4.2" height="4.2" fill="#6dbdf8"/>
<circle cx="173.900" cy="112" r="23.600" fill="none" stroke="#d9d9d9" stroke-width="1.300"/><path d="M176 110L187 99" stroke="#6dbdf8" stroke-width="1.4" fill="none" /><path d="M190 96l-6.500 2 4.500 4.500z" fill="#6dbdf8"/><rect x="171.8" y="109.9" width="4.2" height="4.2" fill="#6dbdf8"/>
<path d="M221.800 132.800Q227 96 264 90.800" stroke="#d9d9d9" stroke-width="1.3" fill="none" /><rect x="219.7" y="130.7" width="4.2" height="4.2" fill="#6dbdf8"/><rect x="232.9" y="102.0" width="4.2" height="4.2" fill="#6dbdf8"/><rect x="261.9" y="88.7" width="4.2" height="4.2" fill="#6dbdf8"/>
<path d="M280.400 93.500H301.700V108.600H280.400z" stroke="#d9d9d9" stroke-width="1.3" fill="none" /><rect x="278.6" y="91.7" width="3.6" height="3.6" fill="#6dbdf8"/><rect x="299.9" y="106.8" width="3.6" height="3.6" fill="#6dbdf8"/>
<ellipse cx="290.300" cy="137.600" rx="11.200" ry="8.200" fill="none" stroke="#d9d9d9" stroke-width="1.300"/><rect x="288.6" y="135.9" width="3.4" height="3.4" fill="#6dbdf8"/><rect x="288.6" y="127.6" width="3.4" height="3.4" fill="#6dbdf8"/><rect x="299.7" y="135.9" width="3.4" height="3.4" fill="#6dbdf8"/>
<path d="M279.300 165H302.900M279.300 181.400H302.900M282.800 161.600V184.900M299.900 161.600V184.900" stroke="#d9d9d9" stroke-width="1.3" fill="none" />
<path d="M284 172l6-6M284 178l12-12M286 181l13-13M292 181l7-7" stroke="#6dbdf8" stroke-width="1.3" fill="none" />
<path d="M361 89l4.500 5.500h-3.300v5.300h5.300v-3.300l5.500 4.500-5.500 4.500v-3.300h-5.300v5.300h3.300l-4.500 5.500-4.500-5.500h3.300v-5.300h-5.300v3.300l-5.500-4.500 5.500-4.500v3.300h5.300v-5.300h-3.300z" fill="#f4f4f4"/>
<path d="M466 92.500A10 10 0 1 0 477 100" stroke="#e8e8e8" stroke-width="1.4" fill="none" /><path d="M466 88.500v8l7-4z" fill="#f4f4f4"/>
<path d="M559.100 91.500h11" stroke="#6dbdf8" stroke-width="1.3" fill="none" stroke-dasharray="2.600 1.200"/><path d="M575.100 91.500h8" stroke="#d9d9d9" stroke-width="1.3" fill="none" />
<path d="M571.100 88.700L573.700 91.800L574 101.700L571.800 103.300L570.500 101.700z" fill="#f6f6f6"/><path d="M562.700 94L565.600 93.500L573.400 101.300L571.800 103.600L563.100 97.600z" fill="#f6f6f6"/><circle cx="572.200" cy="102.600" r="0.800" fill="#3b4453"/><ellipse cx="571" cy="108.700" rx="2.300" ry="3.500" fill="none" stroke="#f6f6f6" stroke-width="1.800" transform="rotate(22 571 108.700)"/><ellipse cx="576.800" cy="106.400" rx="2.300" ry="3.500" fill="none" stroke="#f6f6f6" stroke-width="1.800" transform="rotate(-55 576.800 106.400)"/><path d="M571.800 103.300l0.300 2.200M573 103l1.500 1.500" stroke="#f6f6f6" stroke-width="1.8" fill="none" />
<path d="M695 89v8.500l-13.500 11-4-4z" fill="#f9cf6e"/><path d="M681.500 108.500l-4-4-1.300 1a2.800 2.800 0 0 0 4 4z" fill="#f0566a"/><path d="M677 104.300l4.200 4.200 1.500-1.300-4.200-4.200z" fill="#f4f4f4"/><path d="M671 112.500h4.500" stroke="#d9d9d9" stroke-width="1.3" fill="none" /><path d="M682 112.500h13" stroke="#6dbdf8" stroke-width="1.3" fill="none" />
<circle cx="354.500" cy="130.800" r="4.700" fill="none" stroke="#d9d9d9" stroke-width="1.300"/><path d="M362.500 129.500h5.500v5" stroke="#d9d9d9" stroke-width="1.3" fill="none" /><path d="M365 133.500h6l-3 4z" fill="#f4f4f4"/><circle cx="359" cy="144.100" r="4.500" fill="none" stroke="#6dbdf8" stroke-width="1.300"/><circle cx="368.200" cy="144.100" r="4.500" fill="none" stroke="#6dbdf8" stroke-width="1.300"/>
<path d="M455.800 147.200H465.400V127.300z" stroke="#d9d9d9" stroke-width="1.3" fill="none" /><path d="M467.400 147.200H477.200L467.400 127.300z" stroke="#6dbdf8" stroke-width="1.3" fill="none" />
<path d="M559.600 140.500Q559.600 126 573.500 125.500" stroke="#6dbdf8" stroke-width="1.3" fill="none" /><path d="M575 125.400h7.600M559.600 142v6.800" stroke="#d9d9d9" stroke-width="1.3" fill="none" />
<path d="M671.200 146.800V133L677.400 126H692.300L694.100 127.500V141.300L688.300 146.800" stroke="#6dbdf8" stroke-width="1.2" fill="none" /><path d="M674.700 131.700L678.900 127.700H689.800L686 131.700M689.500 133.800L692.500 130.800V139.500L689.500 144.300" stroke="#6dbdf8" stroke-width="0.9" fill="none" /><path d="M673 133.300h13.800v13.500h-13.800z" stroke="#d9d9d9" stroke-width="1.4" fill="none" />
<path d="M349.200 161.800h9.800v22.900h-9.800z" stroke="#d9d9d9" stroke-width="1.3" fill="none" /><path d="M361.500 161.800h5.500l6 22.900h-11.500" stroke="#6dbdf8" stroke-width="1.3" fill="none" /><path d="M355 180h8.500" stroke="#d9d9d9" stroke-width="1.3" fill="none" /><path d="M362.500 177.500v5l3.800-2.500z" fill="#f4f4f4"/>
<path d="M455.300 171V161.600H478.600V184.900H469" stroke="#6dbdf8" stroke-width="1.3" fill="none" /><path d="M455.300 172.800H467.600V184.900H455.300z" stroke="#d9d9d9" stroke-width="1.3" fill="none" />
<path d="M561.200 163.700h7.700v7.500h-7.700z" stroke="#d9d9d9" stroke-width="1.3" fill="none" /><path d="M572.200 163.700h8.400v7.500h-8.400z" stroke="#6dbdf8" stroke-width="1.3" fill="none" /><path d="M561.200 174.800h7.700v7.600h-7.700z" stroke="#6dbdf8" stroke-width="1.3" fill="none" /><path d="M572.200 174.800h8.400v7.600h-8.400z" stroke="#6dbdf8" stroke-width="1.3" fill="none" />
<path d="M695 165.300H678.900a7.650 7.650 0 0 0 0 15.300H695" stroke="#6dbdf8" stroke-width="1.4" fill="none" /><path d="M695 169.700H679.800a3.450 3.450 0 0 0 0 6.900H695" stroke="#d9d9d9" stroke-width="1.4" fill="none" />
<path d="M802.300 88V136M849.700 88V136M806 97.400H846" stroke="#d9d9d9" stroke-width="1.3" fill="none" /><path d="M803.200 97.400l6.200-3.400v6.800zM848.800 97.400l-6.200-3.400v6.800z" fill="#d9d9d9"/>
<path d="M8.500 -2.400L18.500 -0.500V0.500L8.500 2.400z" fill="#f9cf6e" transform="translate(825.800 129.600) rotate(-90)"/>
<path d="M8.500 -2.400L18.500 -0.500V0.500L8.500 2.400z" fill="#f9cf6e" transform="translate(825.800 129.600) rotate(-45)"/>
<path d="M8.500 -2.400L18.500 -0.500V0.500L8.500 2.400z" fill="#f9cf6e" transform="translate(825.800 129.600) rotate(-135)"/>
<path d="M8.500 -2.400L18.500 -0.500V0.500L8.500 2.400z" fill="#f9cf6e" transform="translate(825.800 129.600) rotate(0)"/>
<path d="M8.500 -2.400L18.500 -0.500V0.500L8.500 2.400z" fill="#f9cf6e" transform="translate(825.800 129.600) rotate(180)"/>
<path d="M879.500 91V111M902.800 91V111" stroke="#d9d9d9" stroke-width="1.3" fill="none" /><path d="M883 97.400h16.500" stroke="#6dbdf8" stroke-width="1.3" fill="none" /><path d="M880.500 97.400l4-2.400v4.800zM901.800 97.400l-4-2.400v4.800z" fill="#6dbdf8"/>
<circle cx="897.400" cy="132.900" r="4.200" fill="none" stroke="#d9d9d9" stroke-width="1.300"/><path d="M893.200 132.900h-5l-5 9" stroke="#d9d9d9" stroke-width="1.3" fill="none" /><path d="M879.800 146.800l1.300-7.800 5.200 3.700z" fill="#d9d9d9"/>
<path d="M880.200 163.700H902V181.500H880.200zM880.200 168.700H902M880.200 173H902M880.200 177.300H902M887.500 168.700V181.500M894.700 168.700V181.500" stroke="#d9d9d9" stroke-width="1.2" fill="none" />
<path d="M1035.200 106.1H1059.100L1041.900 124.3H1017.900z" fill="#dcdcdc" stroke="#2f4763" stroke-width="0.900"/>
<path d="M1035.200 97H1059.100L1041.900 115.2H1017.900z" fill="#dcdcdc" stroke="#2f4763" stroke-width="0.900"/>
<path d="M1035.200 87.9H1059.100L1041.900 106.10000000000001H1017.900z" fill="#dcdcdc" stroke="#2f4763" stroke-width="0.900"/>
<rect x="1046" y="108.900" width="20" height="27.100" fill="#f4f4f4" stroke="#2f4763" stroke-width="0.900"/><rect x="1048.500" y="111.400" width="13.500" height="10.400" fill="#78c8ff" stroke="#2f4763" stroke-width="0.900"/><path d="M1050 127.400h11M1050 131.400h11M1052.400 125.900v3M1058.500 129.900v3" stroke="#666" stroke-width="1" fill="none" />
<path d="M1096.800 97.500a7.600 7.600 0 1 1 15.200 0c0 3.500-2.500 5-3 7.500h-9.200c-.5-2.500-3-4-3-7.500z" fill="#f9cf6e"/><path d="M1100 106h8.800v2.500a2.500 2.500 0 0 1-2.500 2.500h-3.800a2.500 2.500 0 0 1-2.500-2.500z" fill="#f4f4f4"/>
<circle cx="1132.300" cy="99.200" r="7" fill="#f9cf6e"/>
<path d="M8.800 0H11.800" stroke="#f9cf6e" stroke-width="1.300" transform="translate(1132.300 99.200) rotate(0)"/>
<path d="M8.800 0H11.800" stroke="#f9cf6e" stroke-width="1.300" transform="translate(1132.300 99.200) rotate(45)"/>
<path d="M8.800 0H11.800" stroke="#f9cf6e" stroke-width="1.300" transform="translate(1132.300 99.200) rotate(90)"/>
<path d="M8.800 0H11.800" stroke="#f9cf6e" stroke-width="1.300" transform="translate(1132.300 99.200) rotate(135)"/>
<path d="M8.800 0H11.800" stroke="#f9cf6e" stroke-width="1.300" transform="translate(1132.300 99.200) rotate(180)"/>
<path d="M8.800 0H11.800" stroke="#f9cf6e" stroke-width="1.300" transform="translate(1132.300 99.200) rotate(225)"/>
<path d="M8.800 0H11.800" stroke="#f9cf6e" stroke-width="1.300" transform="translate(1132.300 99.200) rotate(270)"/>
<path d="M8.800 0H11.800" stroke="#f9cf6e" stroke-width="1.300" transform="translate(1132.300 99.200) rotate(315)"/>
<rect x="1151.500" y="90.500" width="15.500" height="16" fill="#79849a"/><path d="M1149 94v-5.500h5M1164 88.500h5v5.500M1149 103v5.500h5" stroke="#d9d9d9" stroke-width="1.2" fill="none" />
<circle cx="1167.500" cy="106.500" r="5.500" fill="#3b4453"/><path d="M-4.6 0H4.6M-2.53 -1.47L-2.85 0L-2.53 1.47M2.53 -1.47L2.85 0L2.53 1.47" stroke="#4fd3dc" stroke-width="1.200" fill="none" transform="translate(1167.5 106.5) rotate(0)"/><path d="M-4.6 0H4.6M-2.53 -1.47L-2.85 0L-2.53 1.47M2.53 -1.47L2.85 0L2.53 1.47" stroke="#4fd3dc" stroke-width="1.200" fill="none" transform="translate(1167.5 106.5) rotate(60)"/><path d="M-4.6 0H4.6M-2.53 -1.47L-2.85 0L-2.53 1.47M2.53 -1.47L2.85 0L2.53 1.47" stroke="#4fd3dc" stroke-width="1.200" fill="none" transform="translate(1167.5 106.5) rotate(120)"/>
<rect x="1178" y="100.500" width="17" height="10.500" fill="#f9cf6e"/><rect x="1185.700" y="103" width="1.600" height="5" fill="#555"/><path d="M1190 100.500v-4.500a5 5 0 0 1 10 0v2.500" stroke="#f9cf6e" stroke-width="2.2" fill="none" />
<rect x="1208" y="89.500" width="21" height="20.500" fill="#ffbf00" stroke="#e8e0c8" stroke-width="1.200"/>
<path d="M1102.0 126.0H1113.0L1104.0 135.0H1093.0z" fill="#d9d9d9"/>
<circle cx="1112.5" cy="140" r="4.800" fill="#4fd3dc"/><path d="M1109.5 143.5h6v3.500a2 2 0 0 1-2 2h-2a2 2 0 0 1-2-2z" fill="#f4f4f4"/><rect x="1109.5" y="142.5" width="6" height="2" fill="#4fd3dc"/>
<path d="M1140.2 134.9H1150.2L1140.2 144.2H1130.2z" fill="#8ccbfb" stroke="#3b4453" stroke-width="0.800"/><path d="M1140.2 129.9H1150.2L1140.2 139.2H1130.2z" fill="#d9d9d9" stroke="#3b4453" stroke-width="0.800"/><path d="M1140.2 124.9H1150.2L1140.2 134.2H1130.2z" fill="#d9d9d9" stroke="#3b4453" stroke-width="0.800"/>
<path d="M1152.500 139.500l-7 7" stroke="#f4f4f4" stroke-width="1.4" fill="none" /><path d="M1143 149l1.500-6 4.500 4.500z" fill="#f4f4f4"/>
<path d="M1174.0 126.0H1185.0L1176.0 135.0H1165.0z" fill="#d9d9d9"/>
<path d="M-5.3 0H5.3M-2.92 -1.70L-3.29 0L-2.92 1.70M2.92 -1.70L3.29 0L2.92 1.70" stroke="#4fd3dc" stroke-width="1.200" fill="none" transform="translate(1181.5 141.5) rotate(0)"/><path d="M-5.3 0H5.3M-2.92 -1.70L-3.29 0L-2.92 1.70M2.92 -1.70L3.29 0L2.92 1.70" stroke="#4fd3dc" stroke-width="1.200" fill="none" transform="translate(1181.5 141.5) rotate(60)"/><path d="M-5.3 0H5.3M-2.92 -1.70L-3.29 0L-2.92 1.70M2.92 -1.70L3.29 0L2.92 1.70" stroke="#4fd3dc" stroke-width="1.200" fill="none" transform="translate(1181.5 141.5) rotate(120)"/>
<path d="M1210.0 126.0H1221.0L1212.0 135.0H1201.0z" fill="#d9d9d9"/>
<rect x="1214.0" y="140" width="11" height="9" fill="#4fd3dc"/><rect x="1218.8" y="142.5" width="1.400" height="4" fill="#445"/><path d="M1216.2 140v-3a3.300 3.300 0 0 1 6.600 0v3" stroke="#4fd3dc" stroke-width="1.700" fill="none"/>
<path d="M1247.0 139.8H1261.5L1251.5 149.1H1237.0z" fill="#d9d9d9" stroke="#3b4453" stroke-width="0.800"/><path d="M1247.0 134.8H1261.5L1251.5 144.1H1237.0z" fill="#d9d9d9" stroke="#3b4453" stroke-width="0.800"/><path d="M1247.0 129.8H1261.5L1251.5 139.1H1237.0z" fill="#7cc4fb" stroke="#3b4453" stroke-width="0.800"/><circle cx="1249.400" cy="129.400" r="4.700" fill="#d9d9d9"/>
<path d="M1103.0 171.0H1113.0L1103.0 180.3H1093.0z" fill="#d9d9d9" stroke="#3b4453" stroke-width="0.800"/><path d="M1103.0 166.0H1113.0L1103.0 175.3H1093.0z" fill="#d9d9d9" stroke="#3b4453" stroke-width="0.800"/><path d="M1103.0 161.0H1113.0L1103.0 170.3H1093.0z" fill="#d9d9d9" stroke="#3b4453" stroke-width="0.800"/>
<circle cx="1112.500" cy="176.500" r="5.800" fill="#3b4453"/><circle cx="1112.5" cy="176.5" r="4.800" fill="#f9cf6e"/><path d="M1109.5 180.0h6v3.500a2 2 0 0 1-2 2h-2a2 2 0 0 1-2-2z" fill="#f4f4f4"/><rect x="1109.5" y="179.0" width="6" height="2" fill="#f9cf6e"/>
<path d="M1140.2 171.0H1150.2L1140.2 180.3H1130.2z" fill="#8ccbfb" stroke="#3b4453" stroke-width="0.800"/><path d="M1140.2 166.0H1150.2L1140.2 175.3H1130.2z" fill="#d9d9d9" stroke="#3b4453" stroke-width="0.800"/><path d="M1140.2 161.0H1150.2L1140.2 170.3H1130.2z" fill="#d9d9d9" stroke="#3b4453" stroke-width="0.800"/>
<path d="M1143.500 184.500l7-7" stroke="#f4f4f4" stroke-width="1.4" fill="none" /><path d="M1153 175l-1.500 6-4.500-4.500z" fill="#f4f4f4"/>
<path d="M1175.0 171.0H1185.0L1175.0 180.3H1165.0z" fill="#d9d9d9" stroke="#3b4453" stroke-width="0.800"/><path d="M1175.0 166.0H1185.0L1175.0 175.3H1165.0z" fill="#d9d9d9" stroke="#3b4453" stroke-width="0.800"/><path d="M1175.0 161.0H1185.0L1175.0 170.3H1165.0z" fill="#d9d9d9" stroke="#3b4453" stroke-width="0.800"/>
<circle cx="1181.500" cy="178" r="7.500" fill="#3b4453"/><circle cx="1181.500" cy="178" r="4" fill="#f9cf6e"/>
<rect x="5.300" y="-0.800" width="1.700" height="1.600" fill="#f9cf6e" transform="translate(1181.500 178) rotate(0)"/>
<rect x="5.300" y="-0.800" width="1.700" height="1.600" fill="#f9cf6e" transform="translate(1181.500 178) rotate(45)"/>
<rect x="5.300" y="-0.800" width="1.700" height="1.600" fill="#f9cf6e" transform="translate(1181.500 178) rotate(90)"/>
<rect x="5.300" y="-0.800" width="1.700" height="1.600" fill="#f9cf6e" transform="translate(1181.500 178) rotate(135)"/>
<rect x="5.300" y="-0.800" width="1.700" height="1.600" fill="#f9cf6e" transform="translate(1181.500 178) rotate(180)"/>
<rect x="5.300" y="-0.800" width="1.700" height="1.600" fill="#f9cf6e" transform="translate(1181.500 178) rotate(225)"/>
<rect x="5.300" y="-0.800" width="1.700" height="1.600" fill="#f9cf6e" transform="translate(1181.500 178) rotate(270)"/>
<rect x="5.300" y="-0.800" width="1.700" height="1.600" fill="#f9cf6e" transform="translate(1181.500 178) rotate(315)"/>
<path d="M1210.0 162.0H1221.0L1212.0 171.0H1201.0z" fill="#d9d9d9"/>
<rect x="1211.0" y="176" width="11" height="9" fill="#f9cf6e"/><rect x="1215.8" y="178.5" width="1.400" height="4" fill="#445"/><path d="M1218.0 176v-4a3.300 3.300 0 0 1 6.600 0v2" stroke="#f9cf6e" stroke-width="1.700" fill="none"/>
<path d="M1247.0 171.0H1257.0L1247.0 180.3H1237.0z" fill="#d9d9d9" stroke="#3b4453" stroke-width="0.800"/><path d="M1247.0 166.0H1257.0L1247.0 175.3H1237.0z" fill="#d9d9d9" stroke="#3b4453" stroke-width="0.800"/><path d="M1247.0 161.0H1257.0L1247.0 170.3H1237.0z" fill="#d9d9d9" stroke="#3b4453" stroke-width="0.800"/>
<path d="M1248 176.500l5-4.500 7.500 8-5 4.500z" fill="#f9cf6e" stroke="#3b4453" stroke-width="0.600"/><path d="M1253 172l3.500-3 2.500 2.500 2-1.800 1.500 1.500-6 5.800z" fill="#f4f4f4" stroke="#3b4453" stroke-width="0.600"/>
<path d="M1434 84.800h17.700l8.500 8.500v28.900h-26.200z" fill="#8ccbfb"/><path d="M1451.700 84.800v8.500h8.500z" fill="#d6ecfd" stroke="#3b4453" stroke-width="0.500"/>
<rect x="1414.100" y="101.100" width="29.700" height="21.400" fill="#6a7386"/><circle cx="1443.400" cy="122.500" r="10.300" fill="#6a7386"/><rect x="1414.100" y="101.100" width="29.700" height="21.400" fill="none" stroke="#d9d9d9" stroke-width="1.300"/><circle cx="1443.400" cy="122.500" r="10.300" fill="none" stroke="#d9d9d9" stroke-width="1.300"/><rect x="1411.8" y="121.0" width="4" height="4" fill="#d9d9d9"/>
<rect x="1472" y="98.2" width="14.500" height="10.6" fill="#6a7386"/><circle cx="1486.4" cy="108.5" r="4.300" fill="#6a7386"/><rect x="1472" y="98.2" width="14.500" height="10.6" fill="none" stroke="#d9d9d9" stroke-width="1.200"/><circle cx="1486.4" cy="108.5" r="4.300" fill="none" stroke="#d9d9d9" stroke-width="1.200"/><rect x="1470.7" y="107.0" width="3" height="3" fill="#d9d9d9"/><polygon points="1488.70,88.70 1489.73,92.62 1493.23,90.57 1491.18,94.07 1495.10,95.10 1491.18,96.13 1493.23,99.63 1489.73,97.58 1488.70,101.50 1487.67,97.58 1484.17,99.63 1486.22,96.13 1482.30,95.10 1486.22,94.07 1484.17,90.57 1487.67,92.62" fill="#f9cf6e"/>
<rect x="1472" y="131.2" width="14.500" height="12.5" fill="#6a7386"/><circle cx="1489.1000000000001" cy="143.39999999999998" r="4.300" fill="#6a7386"/><rect x="1472" y="131.2" width="14.500" height="12.5" fill="none" stroke="#d9d9d9" stroke-width="1.200"/><circle cx="1489.1000000000001" cy="143.39999999999998" r="4.300" fill="none" stroke="#d9d9d9" stroke-width="1.200"/><rect x="1470.7" y="141.89999999999998" width="3" height="3" fill="#d9d9d9"/><path d="M1482.90 137.80L1487.20 137.32L1484.11 133.65z" fill="#c9c9c9" stroke="#3b4453" stroke-width="0.500"/><path d="M1487.20 137.32L1494.30 131.34L1491.21 127.67L1484.11 133.65z" fill="#f9cf6e" stroke="#3b4453" stroke-width="0.500"/><path d="M1494.30 131.34L1495.68 130.18Q1495.67 127.06 1492.59 126.51L1491.21 127.67z" fill="#f25c5c"/>
<path d="M1470.900 163.300H1481.400L1493 174.200L1482.900 185L1470.900 173z" fill="#d9d9d9"/><circle cx="1475.500" cy="167.600" r="1.300" fill="#445"/><path d="M1478.500 170.500l7.500 7M1476 174l6.500 6" stroke="#555" stroke-width="0.9" fill="none" stroke-dasharray="2 1"/><path d="M1482.50 173.00L1486.80 172.53L1483.72 168.85z" fill="#c9c9c9" stroke="#3b4453" stroke-width="0.500"/><path d="M1486.80 172.53L1494.30 166.24L1491.21 162.56L1483.72 168.85z" fill="#f9cf6e" stroke="#3b4453" stroke-width="0.500"/><path d="M1494.30 166.24L1495.68 165.08Q1495.67 161.96 1492.59 161.40L1491.21 162.56z" fill="#f25c5c"/>
<rect x="1672" y="89.500" width="30" height="42" fill="#d9d9d9"/><rect x="1676" y="93" width="19.500" height="14" fill="#8ccbfb" stroke="#555" stroke-width="0.800"/><path d="M1677 115.500h17M1677 124h15M1680.500 113.500v4M1691 121.500v5" stroke="#666" stroke-width="1" fill="none" />
<path d="M1694.200 123.400L1701.100 118.100L1714.100 131.900L1707.200 137.200z" fill="#f9cf6e" stroke="#3b4453" stroke-width="0.700"/><path d="M1701.100 118.100L1705 115.200L1709.500 119.500L1715 114.500L1718.500 118.500L1713.500 123L1718 127.500L1714.100 131.900z" fill="#f4f4f4" stroke="#3b4453" stroke-width="0.700"/>
<path d="M1753.8 101L1747.70 90.43A12.2 12.2 0 0 1 1759.90 90.43z" fill="#f7c948"/>
<path d="M1753.8 101L1759.90 90.43A12.2 12.2 0 0 1 1766.00 101.00z" fill="#f9963c"/>
<path d="M1753.8 101L1766.00 101.00A12.2 12.2 0 0 1 1759.90 111.57z" fill="#ea5a52"/>
<path d="M1753.8 101L1759.90 111.57A12.2 12.2 0 0 1 1747.70 111.57z" fill="#8a5cf5"/>
<path d="M1753.8 101L1747.70 111.57A12.2 12.2 0 0 1 1741.60 101.00z" fill="#17b0d2"/>
<path d="M1753.8 101L1741.60 101.00A12.2 12.2 0 0 1 1747.70 90.43z" fill="#4fcf88"/>
<rect x="1741.800" y="125" width="24.200" height="1.300" fill="#d9d9d9"/><rect x="1741.800" y="129" width="24.200" height="3" fill="#d9d9d9"/><rect x="1741.800" y="135" width="24.200" height="5" fill="#d9d9d9"/><rect x="1741.800" y="143" width="24.200" height="6" fill="#d9d9d9"/>
<path d="M1741.800 164.4h24.200" stroke="#d9d9d9" stroke-width="1.3" fill="none" stroke-dasharray="2 1.600"/>
<path d="M1741.800 168.4h24.200" stroke="#d9d9d9" stroke-width="1.3" fill="none" stroke-dasharray="4.600 1.200"/>
<path d="M1741.800 172.4h24.200" stroke="#d9d9d9" stroke-width="1.3" fill="none" stroke-dasharray="30 0"/>
<path d="M1741.800 176.5h24.200" stroke="#d9d9d9" stroke-width="1.3" fill="none" stroke-dasharray="4.600 1.200"/>
<path d="M1741.800 180.6h24.200" stroke="#d9d9d9" stroke-width="1.3" fill="none" stroke-dasharray="5.500 1.200 3 1.200"/>
<rect x="1779" y="89.300" width="24" height="23.500" fill="#ffbf00" stroke="#e8e0c8" stroke-width="1.200"/>
<path d="M1779 136.600h96" stroke="#f4f4f4" stroke-width="1.8" fill="none" /><path d="M1779 172.700h96" stroke="#f4f4f4" stroke-width="1.8" fill="none" />
<path d="M2059.800 96.300h-5.200v39.100h5.200M2081.500 135.400h5.200v-21.300" stroke="#f4f4f4" stroke-width="1.5" fill="none" />
<rect x="2063" y="101.500" width="14" height="11" fill="#4a6788" stroke="#6dbdf8" stroke-width="1.200"/><circle cx="2070" cy="124.500" r="7" fill="#7a8396" stroke="#d9d9d9" stroke-width="1.200"/><polygon points="2087.90,88.50 2089.89,96.09 2096.67,92.13 2092.71,98.91 2100.30,100.90 2092.71,102.89 2096.67,109.67 2089.89,105.71 2087.90,113.30 2085.91,105.71 2079.13,109.67 2083.09,102.89 2075.50,100.90 2083.09,98.91 2079.13,92.13 2085.91,96.09" fill="#f9cf6e"/>
<path d="M2126 89.500h4v23h-4" stroke="#f4f4f4" stroke-width="1.3" fill="none" /><rect x="2116.500" y="92.500" width="7" height="6.500" fill="#4a6788" stroke="#6dbdf8" stroke-width="1.100"/><circle cx="2120" cy="105.500" r="4" fill="#7a8396" stroke="#d9d9d9" stroke-width="1.100"/><path d="M2129.500 99l6 6m0-6l-6 6" stroke="#f25c5c" stroke-width="2.5" fill="none" />
<path d="M2117 125.500h-3.500v20h3.500M2123.500 125.500h3.500v12" stroke="#f4f4f4" stroke-width="1.3" fill="none" /><rect x="2117.500" y="128.500" width="5.500" height="5" fill="#4a6788" stroke="#6dbdf8" stroke-width="1.100"/><circle cx="2120.300" cy="140" r="3.200" fill="#7a8396" stroke="#d9d9d9" stroke-width="1.100"/><path d="M2124.80 146.30L2128.91 145.64L2126.25 142.39z" fill="#c9c9c9" stroke="#3b4453" stroke-width="0.500"/><path d="M2128.91 145.64L2135.77 140.00L2133.10 136.76L2126.25 142.39z" fill="#f9cf6e" stroke="#3b4453" stroke-width="0.500"/><path d="M2135.77 140.00L2137.16 138.86Q2137.37 135.96 2134.49 135.61L2133.10 136.76z" fill="#f25c5c"/>
<path d="M2119 161.500h-3.500v20h3.500M2125.500 161.500h3.500v8" stroke="#f4f4f4" stroke-width="1.3" fill="none" /><rect x="2119.500" y="164.500" width="5.500" height="5" fill="none" stroke="#5fd080" stroke-width="1.200"/><circle cx="2122.300" cy="176" r="3.200" fill="none" stroke="#5fd080" stroke-width="1.200"/><path d="M0 0v11l2.600-2.400 2 4.400 1.800-.8-2-4.300h3.500z" fill="#f4f4f4" stroke="#3b4453" stroke-width="0.500" transform="translate(2128.5 172) scale(1)"/>
<rect x="2180" y="107" width="42.300" height="9.700" fill="#f5c869"/>
<rect x="2183.0" y="107" width="1" height="3" fill="#8a6a20"/>
<rect x="2186.5" y="107" width="1" height="4.5" fill="#8a6a20"/>
<rect x="2190.1" y="107" width="1" height="3" fill="#8a6a20"/>
<rect x="2193.6" y="107" width="1" height="4.5" fill="#8a6a20"/>
<rect x="2197.1" y="107" width="1" height="3" fill="#8a6a20"/>
<rect x="2200.6" y="107" width="1" height="4.5" fill="#8a6a20"/>
<rect x="2204.1" y="107" width="1" height="3" fill="#8a6a20"/>
<rect x="2207.7" y="107" width="1" height="4.5" fill="#8a6a20"/>
<rect x="2211.2" y="107" width="1" height="3" fill="#8a6a20"/>
<rect x="2214.7" y="107" width="1" height="4.5" fill="#8a6a20"/>
<rect x="2218.2" y="107" width="1" height="3" fill="#8a6a20"/>
<path d="M2264.500 94l4.500-5.500-1 4h3.500l-5 6.500 1-4.500z" fill="#f9cf6e"/><path d="M0 0v11l2.600-2.400 2 4.400 1.800-.8-2-4.300h3.500z" fill="#f4f4f4" stroke="#3b4453" stroke-width="0.500" transform="translate(2258.5 96.5) scale(1.15)"/><rect x="2269" y="98.500" width="14" height="14" fill="#f4f4f4"/><path d="M2275 102h6M2275 105.500h6M2275 109h6" stroke="#2f7de0" stroke-width="1.3" fill="none" /><path d="M2271.500 102h1.800M2271.500 105.500h1.800M2271.500 109h1.800" stroke="#2f7de0" stroke-width="1.3" fill="none" />
<rect x="2259.500" y="125.500" width="21" height="21" fill="none" stroke="#5fd080" stroke-width="1.100" stroke-dasharray="2.500 1.500"/><rect x="2262" y="133" width="11" height="11" fill="#5fd080"/><rect x="2266" y="128" width="12" height="12" fill="#8fe0a8" stroke="#3b4453" stroke-width="0.800"/><path d="M0 0v11l2.600-2.400 2 4.400 1.800-.8-2-4.300h3.500z" fill="#f4f4f4" stroke="#3b4453" stroke-width="0.500" transform="translate(2273.5 135.5) scale(1.05)"/>
<rect x="2262" y="161" width="17" height="24" fill="#d9d9d9"/><rect x="2264.500" y="164" width="12" height="4.500" fill="#666"/>
<rect x="2264.5" y="171.0" width="3.200" height="3" fill="#666"/>
<rect x="2268.8" y="171.0" width="3.200" height="3" fill="#666"/>
<rect x="2273.1" y="171.0" width="3.200" height="3" fill="#666"/>
<rect x="2264.5" y="175.2" width="3.200" height="3" fill="#666"/>
<rect x="2268.8" y="175.2" width="3.200" height="3" fill="#666"/>
<rect x="2273.1" y="175.2" width="3.200" height="3" fill="#666"/>
<rect x="2264.5" y="179.4" width="3.200" height="3" fill="#666"/>
<rect x="2268.8" y="179.4" width="3.200" height="3" fill="#666"/>
<rect x="2273.1" y="179.4" width="3.200" height="3" fill="#666"/>
<rect x="2314.900" y="93.100" width="33.400" height="37.200" fill="#dcae74"/><path d="M2322.600 95v-4.600h4.300c0.600-3.400 7.600-3.400 8.200 0h4.300v4.600z" fill="#fafafa" stroke="#3b4453" stroke-width="0.600"/><path d="M2325.700 102.800h18l9.500 9.500v23.700h-27.500z" fill="#d9d9d9" stroke="#3b4453" stroke-width="1"/><path d="M2343.700 102.800v9.500h9.500z" fill="#f4f4f4" stroke="#3b4453" stroke-width="0.600"/>
<rect x="2379" y="89" width="18" height="21" fill="#d9d9d9"/><path d="M2382 93.500h11.500M2382 99.500h9M2382 105.500h9" stroke="#8a8078" stroke-width="0.9" fill="none" /><path d="M2388.800 96L2391.300 95.200L2400 107.500L2397 109z" fill="#fafafa" stroke="#3b4453" stroke-width="0.400"/><path d="M2403 97.500L2403.600 100.700L2395.500 109.200L2393.400 107.300z" fill="#fafafa" stroke="#3b4453" stroke-width="0.400"/><circle cx="2392.800" cy="110.300" r="2" fill="none" stroke="#fafafa" stroke-width="1.500"/><circle cx="2400.300" cy="110.300" r="2" fill="none" stroke="#fafafa" stroke-width="1.500"/>
<path d="M2381.800 125h9.400l4 4v15.500h-13.400z" fill="#d9d9d9"/><path d="M2391.200 125v4h4z" fill="#f4f4f4"/><path d="M2385.800 129.300h10.200l5 5v14.700h-15.200z" fill="#d9d9d9" stroke="#3b4453" stroke-width="0.900"/><path d="M2396 129.300v5h5z" fill="#f4f4f4" stroke="#3b4453" stroke-width="0.500"/>
<path d="M2452.600 93h21.400v14.800h27v21h-48.400z" fill="#d9d9d9"/>
<path d="M1840.300 1498.900h10.400M1845.500 1493.700v10.400" stroke="#e4e4e4" stroke-width="1.3" fill="none" /><rect x="1849" y="1504.800" width="15.200" height="6.300" fill="#e4e4e4"/><rect x="1850.300" y="1506" width="1.500" height="3.900" fill="#444"/>
<path d="M1878.700 1490v23.800h23.500M1878.700 1506.800h7v7" stroke="#e4e4e4" stroke-width="1.3" fill="none" />
<circle cx="1923.500" cy="1502" r="9.300" fill="none" stroke="#e4e4e4" stroke-width="1.300"/><path d="M1934 1492l-9.500 10h13.500" stroke="#e4e4e4" stroke-width="1.3" fill="none" />
<path d="M1950.0 1499.2h12l-6.0 6z" fill="#e4e4e4"/>
<path d="M1977 1492l18 18" stroke="#e8606c" stroke-width="1" fill="none" /><path d="M1986.300 1490v22.500" stroke="#5fdc88" stroke-width="1.1" fill="none" /><rect x="1984.300" y="1499" width="3.800" height="3.800" fill="#3b4453" stroke="#e4e4e4" stroke-width="1"/>
<path d="M2010.0 1499.2h12l-6.0 6z" fill="#e4e4e4"/>
<path d="M2054 1493l-17.700 17.600h23.700" stroke="#fff" stroke-width="1.2" fill="none" /><rect x="2042.800" y="1499.700" width="4.200" height="4.200" fill="#fff"/>
<path d="M2075.500 1493.500h20.400v20.400h-20.400z" stroke="#fff" stroke-width="1.2" fill="none" /><rect x="2072.300" y="1490.600" width="6.200" height="6.200" fill="#618fc2" stroke="#fff" stroke-width="1.100"/>
<path d="M2108.0 1499.2h12l-6.0 6z" fill="#e4e4e4"/>
<path d="M2138 1490.500h24v23.500h-24z" stroke="#e4e4e4" stroke-width="1.3" fill="none" stroke-dasharray="4.500 2.500"/><rect x="2136" y="1488.500" width="9" height="9" fill="#3b4453"/><path d="M2148.500 1501h10.500v10.500h-10.500z" stroke="#e4e4e4" stroke-width="1.3" fill="none" /><path d="M2138 1490.500l6.500 6.500M2138 1495.500v-5h5" stroke="#e4e4e4" stroke-width="1.3" fill="none" />
<path d="M0 -11.900L4.200 1.400L10.400 11.900L0 5.300L-10.400 11.900L-4.200 1.400z" fill="#e4e4e4" transform="translate(2184.6 1502.3)"/><circle cx="2193.500" cy="1495.500" r="3.600" fill="none" stroke="#e4e4e4" stroke-width="1.200"/>
<path d="M0 -11.900L4.200 1.400L10.400 11.900L0 5.300L-10.400 11.900L-4.200 1.400z" fill="#e4e4e4" transform="translate(2220.5 1502.3)"/><path d="M2232.300 1488.500l-5.300 7h3.400l-2.600 6.500 7-8.500h-3.600z" fill="#e4e4e4"/>
<polygon points="2272.34,1499.92 2275.85,1500.12 2275.85,1503.88 2272.34,1504.08 2271.37,1506.43 2273.71,1509.05 2271.05,1511.71 2268.43,1509.37 2266.08,1510.34 2265.88,1513.85 2262.12,1513.85 2261.92,1510.34 2259.57,1509.37 2256.95,1511.71 2254.29,1509.05 2256.63,1506.43 2255.66,1504.08 2252.15,1503.88 2252.15,1500.12 2255.66,1499.92 2256.63,1497.57 2254.29,1494.95 2256.95,1492.29 2259.57,1494.63 2261.92,1493.66 2262.12,1490.15 2265.88,1490.15 2266.08,1493.66 2268.43,1494.63 2271.05,1492.29 2273.71,1494.95 2271.37,1497.57" fill="#e4e4e4"/><circle cx="2264" cy="1502" r="9" fill="#e4e4e4"/><circle cx="2264" cy="1502" r="4" fill="#3b4453"/>
<path d="M2288.0 1499.2h12l-6.0 6z" fill="#e4e4e4"/>
<path d="M2314 1501.600h23.500M2325.500 1490v23.500" stroke="#e4e4e4" stroke-width="2.6" fill="none" />
<path d="M2356.500 1491h9v8.500h-9z" stroke="#e4e4e4" stroke-width="1.2" fill="none" /><circle cx="2374.600" cy="1500.600" r="5.200" fill="none" stroke="#e4e4e4" stroke-width="1.200"/><path d="M2360.300 1513.400h11l-5.500-8.500z" stroke="#e4e4e4" stroke-width="1.2" fill="none" />
<path d="M2395 1484h20.500l9.200 8.500v16.700h-29.700z" fill="#3166a8"/><path d="M2415.500 1484v8.500h9.200z" fill="#8aaad2"/><path d="M2395 1491.800h19M2402.700 1484v19.500" stroke="#dfe9f6" stroke-width="1.8" fill="none" /><circle cx="2402.700" cy="1491.800" r="2.700" fill="#3166a8" stroke="#fff" stroke-width="1.500"/><path d="M2395 1504h13.500l1.500 3-2.500 4 3 4.200h-15.500z" fill="#f5b720"/><path d="M2409.800 1511.300l7.300 7 13.300-14.300" stroke="#4caf50" stroke-width="4" fill="none"/>
<path d="M2444.500 1498.500A10.200 10.200 0 0 1 2464.600 1503.500" fill="none" stroke="#e4e4e4" stroke-width="1.500"/><path d="M2441 1494.300l7.500 2.700-5.700 5z" fill="#e4e4e4"/><path d="M2454.300 1494v7.500h5.500" stroke="#e4e4e4" stroke-width="1.3" fill="none" /><path d="M2441.200 1500.300h8.300l3.500 3.500v10h-11.800z" fill="#3166a8" stroke="#fff" stroke-width="0.900"/><path d="M2441.700 1509l11 3.500v1.300h-11z" fill="#f5b720"/><path d="M2441.500 1504.300h6M2444.500 1500.500v8" stroke="#fff" stroke-width="0.9" fill="none" /><circle cx="2444.500" cy="1504.300" r="1.300" fill="#3166a8" stroke="#fff" stroke-width="0.800"/><circle cx="2459.400" cy="1508.700" r="5.500" fill="#5aaae6"/><rect x="2458.700" y="1507.500" width="1.400" height="4" fill="#fff"/><rect x="2458.700" y="1505" width="1.400" height="1.400" fill="#fff"/>
<path d="M2485.500 1493.500h23v16.300h-23z" stroke="#e4e4e4" stroke-width="1.3" fill="none" /><path d="M2502 1497h4v4M2506 1497l-5 5M2492 1506.500h-4v-4M2488 1506.500l5-5" stroke="#e4e4e4" stroke-width="1.3" fill="none" />
<rect x="2521" y="1491.4" width="24" height="2.600" fill="#e4e4e4"/>
<rect x="2521" y="1500.2" width="24" height="2.600" fill="#e4e4e4"/>
<rect x="2521" y="1508.9" width="24" height="2.600" fill="#e4e4e4"/>
<rect x="571.5" y="1294" width="1.800" height="1.800" fill="#d0d0d0"/>
<rect x="576.1" y="1294" width="1.800" height="1.800" fill="#d0d0d0"/>
<rect x="580.7" y="1294" width="1.800" height="1.800" fill="#d0d0d0"/>
<rect x="585.3" y="1294" width="1.800" height="1.800" fill="#d0d0d0"/>
<rect x="589.9" y="1294" width="1.800" height="1.800" fill="#d0d0d0"/>
<rect x="594.5" y="1294" width="1.800" height="1.800" fill="#d0d0d0"/>
<path d="M576.500 1315l12.500 12.500m0-12.500l-12.500 12.500" stroke="#e4e4e4" stroke-width="2.7" fill="none" />
<path d="M573 1366.500l11.500-11.500" stroke="#cfcfcf" stroke-width="3.800" stroke-linecap="round"/><path d="M590 1346a6 6 0 1 0 4.500 8.500l-4 .5-2.500-3.500z" fill="#cfcfcf"/>
<rect x="609.500" y="1451.500" width="23" height="16.500" fill="#d8d8d8" stroke="#707070" stroke-width="1"/><rect x="609.500" y="1451.500" width="23" height="3.800" fill="#707070"/><path d="M612 1459l3.500 2.300-3.500 2.300M617 1464.500h4.500" stroke="#555" stroke-width="1" fill="none" />
<path d="M636.8 1458.6h10.5l-5.2 5.8z" fill="#707070"/>
<path d="M2009 1461.700h11.600l-5.800-5.700z" fill="#808080"/>
<rect x="2462.500" y="291.500" width="17.500" height="6.500" fill="#e8e8e8" stroke="#3b3f4a" stroke-width="1.500"/>
<rect x="2496.500" y="282.500" width="13" height="12" fill="#e8e8e8" stroke="#3b3f4a" stroke-width="1.500"/><rect x="2492.500" y="286.500" width="13" height="12.500" fill="#e8e8e8" stroke="#3b3f4a" stroke-width="1.500"/><rect x="2496" y="290.500" width="6" height="5" fill="#3b3f4a"/>
<path d="M2524 286.500l12.500 10m0-10l-12.500 10" stroke="#3b3f4a" stroke-width="6" fill="none" /><path d="M2524 286.500l12.500 10m0-10l-12.500 10" stroke="#f0f0f0" stroke-width="3" fill="none" />
<path d="M2502 323.500h46M2506 375.500h39" stroke="#959595" stroke-width="1" fill="none" />
<circle cx="2539" cy="316" r="4.500" fill="none" stroke="#959595" stroke-width="1.500"/><path d="M2537 314l4 4m0-4l-4 4" stroke="#959595" stroke-width="1.3" fill="none" />
<circle cx="2539" cy="490.500" r="4.500" fill="none" stroke="#959595" stroke-width="1.500"/><path d="M2536 490.500h6l-3 3z" fill="#959595"/>
<path d="M2510 360a14 12 0 1 1 26 -8v8" fill="none" stroke="#959595" stroke-width="2"/><circle cx="2522" cy="348" r="7" fill="none" stroke="#959595" stroke-width="2"/><path d="M2514 360l5-6" stroke="#959595" stroke-width="2"/>
<text x="2526" y="366.500" font-family="Liberation Sans,sans-serif" font-size="9.500" font-weight="bold" fill="#7f95b5">2D</text>
<path d="M2508 399c4 1 7 6 9 12c2 4 12 4 17 0c3-4 6-14 7-21c-1-2-3-2-3.500 0l-2 8l-1-14c-.5-2-3-2-3.500 0l-.5 12l-1.500-15c-.5-2-3-2-3.500 0v15l-2.500-12c-.5-2-3.500-1.500-3.500.5l2 18c-3-3-8-7-12-6.500z" fill="none" stroke="#959595" stroke-width="1.600"/>
<path d="M2510 425l20 20M2530 425l-20 20" stroke="#959595" stroke-width="1.6" fill="none" /><circle cx="2531" cy="445" r="6" fill="none" stroke="#959595" stroke-width="1.800"/><path d="M2535.500 449.500l7 6.500" stroke="#959595" stroke-width="2.8" fill="none" />
<rect x="2508" y="423" width="4" height="4" fill="#959595"/>
<rect x="2528" y="423" width="4" height="4" fill="#959595"/>
<rect x="2508" y="443" width="4" height="4" fill="#959595"/>
<path d="M2523.5 468.0h7l-3.5 4z" fill="#959595"/>
<path d="M66.300 1319.200V1449.500H141.500zM66.300 1437.600h12v11.900M68.200 1355.300l9.300 8.700 9.300-8.700M77.500 1364v9.300M110.500 1429l18.500 18.500M129 1429l-18.500 18.500" stroke="#1d4bff" stroke-width="1.3" fill="none" />
<path d="M1829 930.400h129M1893.400 866v129" stroke="#000" stroke-width="1" fill="none" /><rect x="1889.400" y="926.400" width="8" height="8" fill="none" stroke="#000" stroke-width="1.200"/>
</svg>
<span class="t" style="left:956.10px;top:10.16px;font-size:18px;line-height:23px;color:#e6e6e6;font-family:'Liberation Sans',sans-serif;transform:scaleX(1.0057);">Autodesk AutoCAD 2023</span>
<span class="t" style="left:1176.60px;top:10.16px;font-size:18px;line-height:23px;color:#e6e6e6;font-family:'Liberation Sans',sans-serif;transform:scaleX(0.9968);">uhouse.dwg</span>
<span class="t" style="left:494.10px;top:12.16px;font-size:18px;line-height:23px;color:#6dbdf8;font-family:'Liberation Sans',sans-serif;transform:scaleX(0.9155);">Share</span>
<span class="t" style="left:1710.30px;top:11.91px;font-size:17px;line-height:22px;color:#b3b7bf;font-family:'Liberation Sans',sans-serif;font-style:italic;transform:scaleX(0.9357);">Type a keyword or phrase</span>
<span class="t" style="left:2047.80px;top:12.16px;font-size:18px;line-height:23px;color:#f2f2f2;font-family:'Liberation Sans',sans-serif;transform:scaleX(1.0159);">tiagobonifacio...</span>
<span class="t" style="left:25.80px;top:51.16px;font-size:18px;line-height:23px;color:#f2f2f2;font-family:'Liberation Sans',sans-serif;transform:scaleX(1.0258);">Home</span>
<span class="t" style="left:105.30px;top:51.16px;font-size:18px;line-height:23px;color:#d4d4d4;font-family:'Liberation Sans',sans-serif;transform:scaleX(0.9778);">Insert</span>
<span class="t" style="left:178.60px;top:51.16px;font-size:18px;line-height:23px;color:#d4d4d4;font-family:'Liberation Sans',sans-serif;transform:scaleX(1.0209);">Annotate</span>
<span class="t" style="left:282.40px;top:51.16px;font-size:18px;line-height:23px;color:#d4d4d4;font-family:'Liberation Sans',sans-serif;transform:scaleX(0.9457);">Parametric</span>
<span class="t" style="left:394.00px;top:51.16px;font-size:18px;line-height:23px;color:#d4d4d4;font-family:'Liberation Sans',sans-serif;transform:scaleX(0.9587);">View</span>
<span class="t" style="left:461.20px;top:51.16px;font-size:18px;line-height:23px;color:#d4d4d4;font-family:'Liberation Sans',sans-serif;transform:scaleX(0.9820);">Manage</span>
<span class="t" style="left:554.80px;top:51.16px;font-size:18px;line-height:23px;color:#d4d4d4;font-family:'Liberation Sans',sans-serif;transform:scaleX(1.0667);">Output</span>
<span class="t" style="left:641.60px;top:51.16px;font-size:18px;line-height:23px;color:#d4d4d4;font-family:'Liberation Sans',sans-serif;transform:scaleX(1.0341);">Add-ins</span>
<span class="t" style="left:735.00px;top:51.16px;font-size:18px;line-height:23px;color:#d4d4d4;font-family:'Liberation Sans',sans-serif;transform:scaleX(0.9884);">Collaborate</span>
<span class="t" style="left:856.30px;top:51.16px;font-size:18px;line-height:23px;color:#d4d4d4;font-family:'Liberation Sans',sans-serif;transform:scaleX(0.9320);">Express Tools</span>
<span class="t" style="left:991.30px;top:51.16px;font-size:18px;line-height:23px;color:#d4d4d4;font-family:'Liberation Sans',sans-serif;transform:scaleX(0.9830);">Featured Apps</span>
<span class="t" style="left:1136.60px;top:51.16px;font-size:18px;line-height:23px;color:#f2f2f2;font-family:'Liberation Sans',sans-serif;transform:scaleX(0.9946);">Layout</span>
<span class="t" style="left:24.90px;top:144.16px;font-size:18px;line-height:23px;color:#f2f2f2;font-family:'Liberation Sans',sans-serif;transform:scaleX(0.9289);">Line</span>
<span class="t" style="left:73.30px;top:144.16px;font-size:18px;line-height:23px;color:#f2f2f2;font-family:'Liberation Sans',sans-serif;transform:scaleX(0.9508);">Polyline</span>
<span class="t" style="left:152.60px;top:144.16px;font-size:18px;line-height:23px;color:#f2f2f2;font-family:'Liberation Sans',sans-serif;transform:scaleX(0.9306);">Circle</span>
<span class="t" style="left:227.60px;top:144.16px;font-size:18px;line-height:23px;color:#f2f2f2;font-family:'Liberation Sans',sans-serif;transform:scaleX(1.0074);">Arc</span>
<span class="t" style="left:141.60px;top:201.16px;font-size:18px;line-height:23px;color:#f2f2f2;font-family:'Liberation Sans',sans-serif;transform:scaleX(0.9707);">Draw</span>
<span class="t" style="left:380.10px;top:91.16px;font-size:18px;line-height:23px;color:#f2f2f2;font-family:'Liberation Sans',sans-serif;transform:scaleX(1.0293);">Move</span>
<span class="t" style="left:380.10px;top:127.16px;font-size:18px;line-height:23px;color:#f2f2f2;font-family:'Liberation Sans',sans-serif;transform:scaleX(1.0064);">Copy</span>
<span class="t" style="left:380.10px;top:163.16px;font-size:18px;line-height:23px;color:#f2f2f2;font-family:'Liberation Sans',sans-serif;transform:scaleX(0.9481);">Stretch</span>
<span class="t" style="left:486.00px;top:91.16px;font-size:18px;line-height:23px;color:#f2f2f2;font-family:'Liberation Sans',sans-serif;transform:scaleX(0.9696);">Rotate</span>
<span class="t" style="left:486.00px;top:127.16px;font-size:18px;line-height:23px;color:#f2f2f2;font-family:'Liberation Sans',sans-serif;transform:scaleX(1.0366);">Mirror</span>
<span class="t" style="left:486.00px;top:163.16px;font-size:18px;line-height:23px;color:#f2f2f2;font-family:'Liberation Sans',sans-serif;transform:scaleX(0.8978);">Scale</span>
<span class="t" style="left:589.60px;top:91.16px;font-size:18px;line-height:23px;color:#f2f2f2;font-family:'Liberation Sans',sans-serif;transform:scaleX(0.9467);">Trim</span>
<span class="t" style="left:589.60px;top:127.16px;font-size:18px;line-height:23px;color:#f2f2f2;font-family:'Liberation Sans',sans-serif;transform:scaleX(0.9610);">Fillet</span>
<span class="t" style="left:589.60px;top:163.16px;font-size:18px;line-height:23px;color:#f2f2f2;font-family:'Liberation Sans',sans-serif;transform:scaleX(0.9902);">Array</span>
<span class="t" style="left:486.00px;top:201.16px;font-size:18px;line-height:23px;color:#f2f2f2;font-family:'Liberation Sans',sans-serif;transform:scaleX(1.0772);">Modify</span>
<span class="t" style="left:726.80px;top:73.26px;font-size:61px;line-height:79px;color:#dcdcdc;font-family:'Liberation Sans',sans-serif;transform:scaleX(0.9689);">A</span>
<span class="t" style="left:731.00px;top:144.16px;font-size:18px;line-height:23px;color:#f2f2f2;font-family:'Liberation Sans',sans-serif;transform:scaleX(0.9204);">Text</span>
<span class="t" style="left:783.50px;top:144.16px;font-size:18px;line-height:23px;color:#f2f2f2;font-family:'Liberation Sans',sans-serif;transform:scaleX(0.9935);">Dimension</span>
<span class="t" style="left:910.60px;top:91.16px;font-size:18px;line-height:23px;color:#f2f2f2;font-family:'Liberation Sans',sans-serif;transform:scaleX(0.9013);">Linear</span>
<span class="t" style="left:910.60px;top:127.16px;font-size:18px;line-height:23px;color:#f2f2f2;font-family:'Liberation Sans',sans-serif;transform:scaleX(0.9131);">Leader</span>
<span class="t" style="left:910.60px;top:163.16px;font-size:18px;line-height:23px;color:#f2f2f2;font-family:'Liberation Sans',sans-serif;transform:scaleX(0.9205);">Table</span>
<span class="t" style="left:798.30px;top:201.16px;font-size:18px;line-height:23px;color:#f2f2f2;font-family:'Liberation Sans',sans-serif;transform:scaleX(1.0286);">Annotation</span>
<span class="t" style="left:1022.10px;top:144.16px;font-size:18px;line-height:23px;color:#f2f2f2;font-family:'Liberation Sans',sans-serif;transform:scaleX(0.9178);">Layer</span>
<span class="t" style="left:1002.60px;top:169.16px;font-size:18px;line-height:23px;color:#f2f2f2;font-family:'Liberation Sans',sans-serif;transform:scaleX(0.9637);">Properties</span>
<span class="t" style="left:1236.02px;top:90.16px;font-size:18px;line-height:23px;color:#f2f2f2;font-family:'Liberation Sans',sans-serif;transform:scaleX(0.9355);">janelas</span>
<span class="t" style="left:1268.30px;top:127.16px;font-size:18px;line-height:23px;color:#f2f2f2;font-family:'Liberation Sans',sans-serif;transform:scaleX(0.9690);">Make Current</span>
<span class="t" style="left:1268.30px;top:163.16px;font-size:18px;line-height:23px;color:#f2f2f2;font-family:'Liberation Sans',sans-serif;transform:scaleX(0.9597);">Match Layer</span>
<span class="t" style="left:1164.60px;top:201.16px;font-size:18px;line-height:23px;color:#f2f2f2;font-family:'Liberation Sans',sans-serif;transform:scaleX(0.8926);">Layers</span>
<span class="t" style="left:1414.60px;top:142.16px;font-size:18px;line-height:23px;color:#f2f2f2;font-family:'Liberation Sans',sans-serif;transform:scaleX(0.9667);">Insert</span>
<span class="t" style="left:1502.20px;top:91.16px;font-size:18px;line-height:23px;color:#f2f2f2;font-family:'Liberation Sans',sans-serif;transform:scaleX(0.9278);">Create</span>
<span class="t" style="left:1502.20px;top:127.16px;font-size:18px;line-height:23px;color:#f2f2f2;font-family:'Liberation Sans',sans-serif;transform:scaleX(0.9630);">Edit</span>
<span class="t" style="left:1502.20px;top:163.16px;font-size:18px;line-height:23px;color:#f2f2f2;font-family:'Liberation Sans',sans-serif;transform:scaleX(1.0157);">Edit Attributes</span>
<span class="t" style="left:1493.80px;top:201.16px;font-size:18px;line-height:23px;color:#f2f2f2;font-family:'Liberation Sans',sans-serif;transform:scaleX(0.9342);">Block</span>
<span class="t" style="left:1670.10px;top:145.16px;font-size:18px;line-height:23px;color:#f2f2f2;font-family:'Liberation Sans',sans-serif;transform:scaleX(0.9888);">Match</span>
<span class="t" style="left:1654.50px;top:169.16px;font-size:18px;line-height:23px;color:#f2f2f2;font-family:'Liberation Sans',sans-serif;transform:scaleX(0.9673);">Properties</span>
<span class="t" style="left:1809.00px;top:91.16px;font-size:18px;line-height:23px;color:#f2f2f2;font-family:'Liberation Sans',sans-serif;transform:scaleX(0.9083);">ByLayer</span>
<span class="t" style="left:1878.60px;top:127.16px;font-size:18px;line-height:23px;color:#f2f2f2;font-family:'Liberation Sans',sans-serif;transform:scaleX(0.8992);">ByLayer</span>
<span class="t" style="left:1878.60px;top:163.16px;font-size:18px;line-height:23px;color:#f2f2f2;font-family:'Liberation Sans',sans-serif;transform:scaleX(0.8992);">ByLayer</span>
<span class="t" style="left:1784.60px;top:201.16px;font-size:18px;line-height:23px;color:#f2f2f2;font-family:'Liberation Sans',sans-serif;transform:scaleX(0.9625);">Properties</span>
<span class="t" style="left:2051.40px;top:144.16px;font-size:18px;line-height:23px;color:#f2f2f2;font-family:'Liberation Sans',sans-serif;transform:scaleX(1.0052);">Group</span>
<span class="t" style="left:2057.30px;top:201.16px;font-size:18px;line-height:23px;color:#f2f2f2;font-family:'Liberation Sans',sans-serif;transform:scaleX(0.9739);">Groups</span>
<span class="t" style="left:2167.40px;top:144.16px;font-size:18px;line-height:23px;color:#f2f2f2;font-family:'Liberation Sans',sans-serif;transform:scaleX(0.9540);">Measure</span>
<span class="t" style="left:2182.10px;top:201.16px;font-size:18px;line-height:23px;color:#f2f2f2;font-family:'Liberation Sans',sans-serif;transform:scaleX(0.9750);">Utilities</span>
<span class="t" style="left:2313.20px;top:144.16px;font-size:18px;line-height:23px;color:#f2f2f2;font-family:'Liberation Sans',sans-serif;transform:scaleX(0.8937);">Paste</span>
<span class="t" style="left:2321.60px;top:201.16px;font-size:18px;line-height:23px;color:#f2f2f2;font-family:'Liberation Sans',sans-serif;transform:scaleX(1.0099);">Clipboard</span>
<span class="t" style="left:2459.00px;top:143.16px;font-size:18px;line-height:23px;color:#f2f2f2;font-family:'Liberation Sans',sans-serif;transform:scaleX(0.8772);">Base</span>
<span class="t" style="left:2438.00px;top:201.16px;font-size:18px;line-height:23px;color:#f2f2f2;font-family:'Liberation Sans',sans-serif;transform:scaleX(0.9561);">View</span>
<span class="t" style="left:41.90px;top:237.16px;font-size:18px;line-height:23px;color:#f2f2f2;font-family:'Liberation Sans',sans-serif;transform:scaleX(0.9689);">Start</span>
<span class="t" style="left:113.80px;top:237.16px;font-size:18px;line-height:23px;color:#ffffff;font-family:'Liberation Sans',sans-serif;font-weight:bold;transform:scaleX(0.9844);">uhouse*</span>
<span class="t" style="left:41.90px;top:1489.16px;font-size:18px;line-height:23px;color:#f2f2f2;font-family:'Liberation Sans',sans-serif;transform:scaleX(1.0398);">Model</span>
<span class="t" style="left:129.60px;top:1489.16px;font-size:18px;line-height:23px;color:#f2f2f2;font-family:'Liberation Sans',sans-serif;transform:scaleX(0.9409);">a3</span>
<span class="t" style="left:184.60px;top:1489.16px;font-size:18px;line-height:23px;color:#ffffff;font-family:'Liberation Sans',sans-serif;font-weight:bold;transform:scaleX(0.9793);">Layout1</span>
<span class="t" style="left:1770.60px;top:1493.01px;font-size:17px;line-height:22px;color:#ffffff;font-family:'Liberation Sans',sans-serif;transform:scaleX(0.9334);-webkit-text-stroke:0.45px #fff;">PAPER</span>
<span class="t" style="left:606.60px;top:1302.50px;font-size:18.4px;line-height:24px;color:#1a1a1a;font-family:'Liberation Mono',monospace;letter-spacing:-0.01px;">Command: *Cancel*</span>
<span class="t" style="left:606.60px;top:1325.60px;font-size:18.4px;line-height:24px;color:#1a1a1a;font-family:'Liberation Mono',monospace;letter-spacing:-0.01px;">Command: Specify opposite corner or [Fence/WPolygon/CPolygon]: *Cancel*</span>
<span class="t" style="left:606.60px;top:1348.70px;font-size:18.4px;line-height:24px;color:#1a1a1a;font-family:'Liberation Mono',monospace;letter-spacing:-0.01px;">Command: _.MSPACE</span>
<span class="t" style="left:606.60px;top:1371.80px;font-size:18.4px;line-height:24px;color:#1a1a1a;font-family:'Liberation Mono',monospace;letter-spacing:-0.01px;">Command: *Cancel*</span>
<span class="t" style="left:606.60px;top:1394.90px;font-size:18.4px;line-height:24px;color:#1a1a1a;font-family:'Liberation Mono',monospace;letter-spacing:-0.01px;">Command: *Cancel*</span>
<span class="t" style="left:606.60px;top:1418.00px;font-size:18.4px;line-height:24px;color:#1a1a1a;font-family:'Liberation Mono',monospace;letter-spacing:-0.01px;">Command: _.PSPACE</span>
<span class="t" style="left:658.10px;top:1448.50px;font-size:18.4px;line-height:24px;color:#7d7d7d;font-family:'Liberation Mono',monospace;font-style:italic;transform:scaleX(0.9906);">Type a command</span>
<span class="t" style="left:12.2px;top:971.60px;font-size:18px;line-height:23px;color:#f2f2f2;font-family:'Liberation Sans',sans-serif;transform:rotate(-90deg) scaleX(0.9660);transform-origin:0 0;">Layer Properties Manager</span>
</div></body></html>
